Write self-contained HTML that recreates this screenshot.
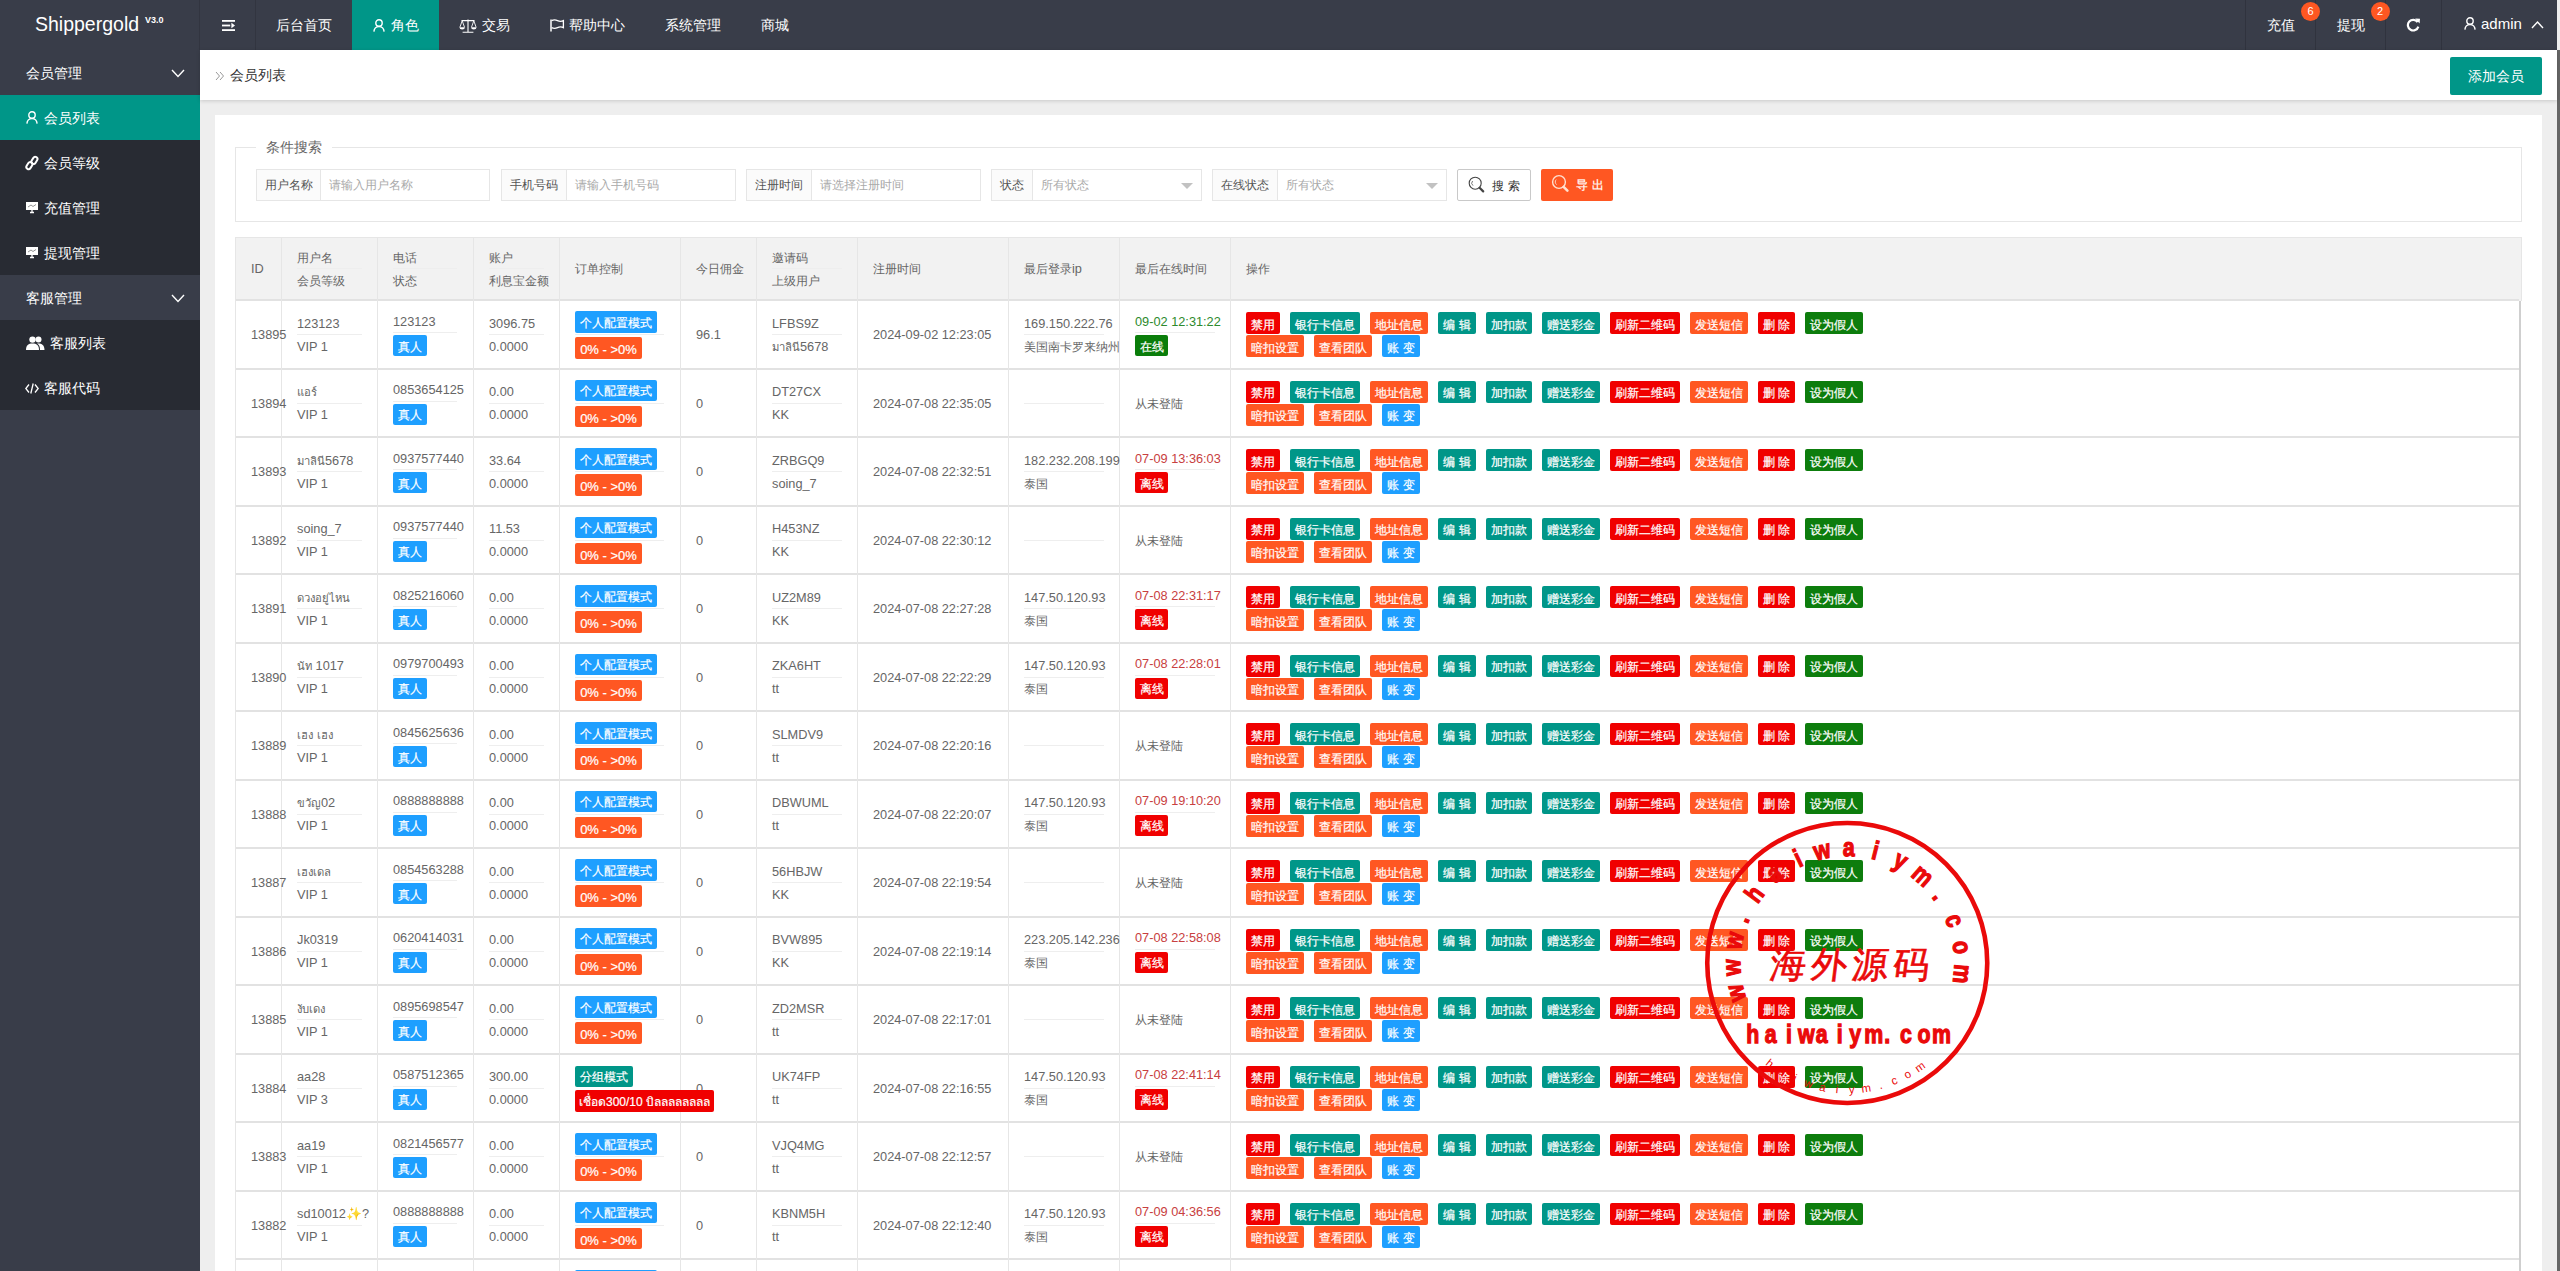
<!DOCTYPE html><html><head><meta charset="utf-8"><title>会员列表</title><style>
*{margin:0;padding:0;box-sizing:border-box}
html,body{width:2560px;height:1271px;overflow:hidden;background:#eeeeee;font-family:"Liberation Sans",sans-serif;position:relative}
.a{position:absolute;white-space:nowrap}
.t{position:absolute;white-space:nowrap;line-height:16px;height:16px}
.hd{color:#fff;font-size:14px;line-height:20px;height:20px}
.bdg{-webkit-text-stroke:0.2px #fff;position:absolute;height:21px;line-height:21px;color:#fff;font-size:12px;padding-top:1.5px;text-align:center;border-radius:2px;white-space:nowrap}
.sep{position:absolute;height:1px;background:#eee}
.vl{position:absolute;width:1px;background:#e6e6e6}
.hl{position:absolute;height:2px;background:#e2e2e2}
.cell{font-size:12.5px;color:#666}
</style></head><body>
<div class="a" style="left:0;top:0;width:2557px;height:50px;background:#393D49"></div>
<div class="a" style="left:35px;top:12px;font-size:19.5px;line-height:24px;color:#fff">Shippergold</div>
<div class="a" style="left:145px;top:14px;font-size:9px;line-height:12px;color:#fff;font-weight:bold">V3.0</div>
<div class="a" style="left:199px;top:0;width:1px;height:50px;background:rgba(0,0,0,.12)"></div>
<div class="a" style="left:255px;top:0;width:1px;height:50px;background:rgba(0,0,0,.12)"></div>
<svg class="a" style="left:222px;top:19.5px" width="13" height="11" viewBox="0 0 13 11"><rect x="0" y="0" width="13" height="1.8" fill="#fff"/><rect x="0" y="4.6" width="8.2" height="1.8" fill="#fff"/><rect x="0" y="9.2" width="13" height="1.8" fill="#fff"/><path d="M9.4 2.8 L13 5.5 L9.4 8.2 Z" fill="#fff"/></svg>
<div class="a" style="left:352px;top:0;width:87px;height:50px;background:#009688"></div>
<div class="a hd" style="left:276px;top:15px">后台首页</div>
<div class="a hd" style="left:391px;top:15px">角色</div>
<div class="a hd" style="left:482px;top:15px">交易</div>
<div class="a hd" style="left:569px;top:15px">帮助中心</div>
<div class="a hd" style="left:665px;top:15px">系统管理</div>
<div class="a hd" style="left:761px;top:15px">商城</div>
<svg class="a" style="left:373px;top:19px" width="12" height="13" viewBox="0 0 12 13"><circle cx="6" cy="4" r="3.2" fill="none" stroke="#fff" stroke-width="1.4"/><path d="M0.9 12.6 C1.2 8.8 3.4 7.6 6 7.6 C8.6 7.6 10.8 8.8 11.1 12.6" fill="none" stroke="#fff" stroke-width="1.4"/></svg>
<svg class="a" style="left:459px;top:18.5px" width="18" height="14" viewBox="0 0 18 14"><circle cx="9" cy="1.3" r="0.9" fill="#fff"/><path d="M9 1.5 V13 M3.6 13.3 H14.4 M2.5 1.6 H15.5" stroke="#fff" stroke-width="1.1" fill="none"/><path d="M3.2 1.8 L0.9 8.2 M3.2 1.8 L5.5 8.2 M14.8 1.8 L12.5 8.2 M14.8 1.8 L17.1 8.2" stroke="#fff" stroke-width="0.9" fill="none"/><path d="M0.4 8.2 H6 Q5.8 10.6 3.2 10.6 Q0.6 10.6 0.4 8.2 Z M12 8.2 H17.6 Q17.4 10.6 14.8 10.6 Q12.2 10.6 12 8.2 Z" fill="#fff"/></svg>
<svg class="a" style="left:550px;top:18.5px" width="15" height="13" viewBox="0 0 15 13"><path d="M1 0.5 V12.5" stroke="#fff" stroke-width="1.5"/><path d="M1.6 1.6 Q4.5 0.2 7.5 1.6 T13.4 1.6 V8.6 Q10.5 7.2 7.5 8.6 T1.6 8.6" stroke="#fff" stroke-width="1.3" fill="none"/></svg>
<div class="a" style="left:2245px;top:0;width:1px;height:50px;background:rgba(0,0,0,.15)"></div>
<div class="a" style="left:2315px;top:0;width:1px;height:50px;background:rgba(0,0,0,.15)"></div>
<div class="a" style="left:2385px;top:0;width:1px;height:50px;background:rgba(0,0,0,.15)"></div>
<div class="a" style="left:2441px;top:0;width:1px;height:50px;background:rgba(0,0,0,.15)"></div>
<div class="a hd" style="left:2267px;top:15px">充值</div>
<div class="a hd" style="left:2337px;top:15px">提现</div>
<div class="a" style="left:2301.0px;top:1.5px;width:19px;height:19px;border-radius:50%;background:#FF5722;color:#fff;font-size:11px;line-height:19px;text-align:center">6</div>
<div class="a" style="left:2370.5px;top:1.5px;width:19px;height:19px;border-radius:50%;background:#FF5722;color:#fff;font-size:11px;line-height:19px;text-align:center">2</div>
<svg class="a" style="left:2406px;top:18px" width="15" height="14" viewBox="0 0 15 14"><path d="M11.6 4.2 A5.3 5.3 0 1 0 12.3 8.6" fill="none" stroke="#fff" stroke-width="2.2"/><path d="M9.2 0.6 L14 0.8 L13.6 5.6 Z" fill="#fff"/></svg>
<svg class="a" style="left:2464px;top:17px" width="12" height="13" viewBox="0 0 12 13"><circle cx="6" cy="4" r="3.2" fill="none" stroke="#fff" stroke-width="1.4"/><path d="M0.9 12.6 C1.2 8.8 3.4 7.6 6 7.6 C8.6 7.6 10.8 8.8 11.1 12.6" fill="none" stroke="#fff" stroke-width="1.4"/></svg>
<div class="a" style="left:2481px;top:14px;font-size:15px;line-height:20px;color:#fff">admin</div>
<svg class="a" style="left:2531px;top:20px" width="13" height="9" viewBox="0 0 13 9"><path d="M1 8 L6.5 2 L12 8" fill="none" stroke="#fff" stroke-width="1.4"/></svg>
<div class="a" style="left:2557px;top:50px;width:3px;height:1221px;background:#666"></div>
<div class="a" style="left:0;top:50px;width:200px;height:1221px;background:#393D49"></div>
<div class="a" style="left:0;top:95px;width:200px;height:180px;background:#282B33"></div>
<div class="a" style="left:0;top:320px;width:200px;height:90px;background:#282B33"></div>
<div class="a" style="left:0;top:95px;width:200px;height:45px;background:#009688"></div>
<div class="a hd" style="left:26px;top:63px">会员管理</div>
<svg class="a" style="left:171px;top:69px" width="14" height="9" viewBox="0 0 14 9"><path d="M1 1 L7 7.5 L13 1" fill="none" stroke="#fff" stroke-width="1.4"/></svg>
<div class="a hd" style="left:26px;top:288px">客服管理</div>
<svg class="a" style="left:171px;top:294px" width="14" height="9" viewBox="0 0 14 9"><path d="M1 1 L7 7.5 L13 1" fill="none" stroke="#fff" stroke-width="1.4"/></svg>
<div class="a hd" style="left:44px;top:108px">会员列表</div>
<div class="a hd" style="left:44px;top:153px">会员等级</div>
<div class="a hd" style="left:44px;top:198px">充值管理</div>
<div class="a hd" style="left:44px;top:243px">提现管理</div>
<div class="a hd" style="left:50px;top:333px">客服列表</div>
<div class="a hd" style="left:44px;top:378px">客服代码</div>
<svg class="a" style="left:26px;top:111px" width="12" height="13" viewBox="0 0 12 13"><circle cx="6" cy="4" r="3.2" fill="none" stroke="#fff" stroke-width="1.4"/><path d="M0.9 12.6 C1.2 8.8 3.4 7.6 6 7.6 C8.6 7.6 10.8 8.8 11.1 12.6" fill="none" stroke="#fff" stroke-width="1.4"/></svg>
<svg class="a" style="left:24px;top:155px" width="16" height="16" viewBox="0 0 16 16"><g fill="none" stroke="#fff" stroke-width="2"><rect x="1.6" y="8.4" width="7.6" height="4.4" rx="2.2" transform="rotate(-58 5.4 10.6)"/><rect x="6.6" y="3.2" width="7.6" height="4.4" rx="2.2" transform="rotate(-58 10.4 5.4)"/></g></svg>
<svg class="a" style="left:26px;top:202px" width="12" height="12" viewBox="0 0 12 12"><rect x="0" y="0" width="12" height="8" fill="#fff"/><path d="M4 10.5 H8 M6 8 V10.5" stroke="#fff" stroke-width="1.3"/><path d="M2 5 L5 3 L7 4.5 L10 2.5" stroke="#777" stroke-width=".8" fill="none"/></svg>
<svg class="a" style="left:26px;top:247px" width="12" height="12" viewBox="0 0 12 12"><rect x="0" y="0" width="12" height="8" fill="#fff"/><path d="M4 10.5 H8 M6 8 V10.5" stroke="#fff" stroke-width="1.3"/><path d="M2 5 L5 3 L7 4.5 L10 2.5" stroke="#777" stroke-width=".8" fill="none"/></svg>
<svg class="a" style="left:26px;top:336px" width="19" height="14" viewBox="0 0 19 14"><g fill="#fff"><circle cx="6.5" cy="3.6" r="3.2"/><path d="M0 14 C0 9 2.5 7.5 6.5 7.5 C10.5 7.5 13 9 13 14 Z"/><circle cx="12.5" cy="3.6" r="3"/><path d="M11 7.6 C15.5 7.3 18.5 8.8 18.5 14 H14 C14 10.5 13 8.8 11 7.6 Z"/></g></svg>
<svg class="a" style="left:25px;top:383px" width="14" height="11" viewBox="0 0 14 11"><path d="M4 1.5 L0.8 5.5 L4 9.5 M10 1.5 L13.2 5.5 L10 9.5 M8.2 0.5 L5.8 10.5" fill="none" stroke="#fff" stroke-width="1.3"/></svg>
<div class="a" style="left:200px;top:50px;width:2357px;height:50px;background:#fff;box-shadow:0 1px 4px rgba(0,0,0,.16)"></div>
<svg class="a" style="left:215px;top:71px" width="10" height="10" viewBox="0 0 10 10"><path d="M1 1 L4.5 5 L1 9 M5 1 L8.5 5 L5 9" fill="none" stroke="#999" stroke-width="1"/></svg>
<div class="a" style="left:230px;top:65px;font-size:14px;line-height:20px;color:#333">会员列表</div>
<div class="a" style="left:2450px;top:57px;width:92px;height:38px;border-radius:2px;background:#009688;color:#fff;font-size:14px;line-height:38px;text-align:center">添加会员</div>
<div class="a" style="left:215px;top:115px;width:2327px;height:1200px;background:#fff"></div>
<div class="a" style="left:235px;top:147px;width:2287px;height:75px;border:1px solid #e6e6e6"></div>
<div class="a" style="left:256px;top:137px;padding:0 10px;background:#fff;font-size:14px;line-height:20px;color:#666">条件搜索</div>
<div class="a" style="left:256px;top:169px;width:65px;height:32px;border:1px solid #e6e6e6;background:#fbfbfb;font-size:12px;line-height:31px;text-align:center;color:#555">用户名称</div><div class="a" style="left:320px;top:169px;width:170px;height:32px;border:1px solid #e6e6e6;background:#fff;font-size:12px;line-height:31px;color:#aaa;padding-left:8px">请输入用户名称</div>
<div class="a" style="left:501px;top:169px;width:66px;height:32px;border:1px solid #e6e6e6;background:#fbfbfb;font-size:12px;line-height:31px;text-align:center;color:#555">手机号码</div><div class="a" style="left:566px;top:169px;width:170px;height:32px;border:1px solid #e6e6e6;background:#fff;font-size:12px;line-height:31px;color:#aaa;padding-left:8px">请输入手机号码</div>
<div class="a" style="left:746px;top:169px;width:66px;height:32px;border:1px solid #e6e6e6;background:#fbfbfb;font-size:12px;line-height:31px;text-align:center;color:#555">注册时间</div><div class="a" style="left:811px;top:169px;width:170px;height:32px;border:1px solid #e6e6e6;background:#fff;font-size:12px;line-height:31px;color:#aaa;padding-left:8px">请选择注册时间</div>
<div class="a" style="left:991px;top:169px;width:42px;height:32px;border:1px solid #e6e6e6;background:#fbfbfb;font-size:12px;line-height:31px;text-align:center;color:#555">状态</div><div class="a" style="left:1032px;top:169px;width:170px;height:32px;border:1px solid #e6e6e6;background:#fff;font-size:12px;line-height:31px;color:#aaa;padding-left:8px">所有状态</div><div class="a" style="left:1181px;top:183px;width:0;height:0;border-left:6px solid transparent;border-right:6px solid transparent;border-top:6px solid #c2c2c2"></div>
<div class="a" style="left:1212px;top:169px;width:66px;height:32px;border:1px solid #e6e6e6;background:#fbfbfb;font-size:12px;line-height:31px;text-align:center;color:#555">在线状态</div><div class="a" style="left:1277px;top:169px;width:170px;height:32px;border:1px solid #e6e6e6;background:#fff;font-size:12px;line-height:31px;color:#aaa;padding-left:8px">所有状态</div><div class="a" style="left:1426px;top:183px;width:0;height:0;border-left:6px solid transparent;border-right:6px solid transparent;border-top:6px solid #c2c2c2"></div>
<div class="a" style="left:1457px;top:169px;width:74px;height:32px;border:1px solid #c9c9c9;background:#fff;border-radius:2px"></div>
<svg class="a" style="left:1468px;top:176px" width="18" height="18" viewBox="0 0 18 18"><circle cx="7.2" cy="7.2" r="6" fill="none" stroke="#444" stroke-width="1.1"/><path d="M11.6 11.8 L15.2 15.4" stroke="#444" stroke-width="2.2" stroke-linecap="round"/><path d="M4.6 5 A3.2 3.2 0 0 0 5 9.6" fill="none" stroke="#555" stroke-width=".8"/></svg>
<div class="a" style="left:1492px;top:178px;font-size:12px;line-height:16px;color:#333;letter-spacing:4px">搜索</div>
<div class="a" style="left:1541px;top:169px;width:72px;height:32px;background:#FF5722;border-radius:2px"></div>
<svg class="a" style="left:1551px;top:174px" width="19" height="19" viewBox="0 0 19 19"><circle cx="8" cy="8" r="6.4" fill="none" stroke="#ffe0d0" stroke-width="1.4"/><path d="M12.6 12.8 L16.4 16.6" stroke="#ffe0d0" stroke-width="2.6" stroke-linecap="round"/><path d="M5.2 5.6 A3.4 3.4 0 0 0 5.6 10.6" fill="none" stroke="#ffe0d0" stroke-width=".9"/></svg>
<div class="a" style="left:1576px;top:177px;font-size:12px;line-height:16px;color:#fff;letter-spacing:4px;-webkit-text-stroke:0.2px #fff">导出</div>
<div class="a" style="left:235px;top:237px;width:2287px;height:64px;background:#f2f2f2;border:1px solid #e6e6e6;border-bottom:none"></div>
<div class="t cell" style="left:251px;top:261px;color:#666;font-size:12.75px;">ID</div>
<div class="t cell" style="left:297px;top:250px;color:#666;font-size:12.75px;"><span style="font-size:12px">用户名</span></div>
<div class="sep" style="left:297px;top:268px;width:65px"></div>
<div class="t cell" style="left:297px;top:273px;color:#666;font-size:12.75px;"><span style="font-size:12px">会员等级</span></div>
<div class="t cell" style="left:393px;top:250px;color:#666;font-size:12.75px;"><span style="font-size:12px">电话</span></div>
<div class="sep" style="left:393px;top:268px;width:64px"></div>
<div class="t cell" style="left:393px;top:273px;color:#666;font-size:12.75px;"><span style="font-size:12px">状态</span></div>
<div class="t cell" style="left:489px;top:250px;color:#666;font-size:12.75px;"><span style="font-size:12px">账户</span></div>
<div class="sep" style="left:489px;top:268px;width:55px"></div>
<div class="t cell" style="left:489px;top:273px;color:#666;font-size:12.75px;"><span style="font-size:12px">利息宝金额</span></div>
<div class="t cell" style="left:772px;top:250px;color:#666;font-size:12.75px;"><span style="font-size:12px">邀请码</span></div>
<div class="sep" style="left:772px;top:268px;width:70px"></div>
<div class="t cell" style="left:772px;top:273px;color:#666;font-size:12.75px;"><span style="font-size:12px">上级用户</span></div>
<div class="t cell" style="left:575px;top:261px;color:#666;font-size:12.75px;"><span style="font-size:12px">订单控制</span></div>
<div class="t cell" style="left:696px;top:261px;color:#666;font-size:12.75px;"><span style="font-size:12px">今日佣金</span></div>
<div class="t cell" style="left:873px;top:261px;color:#666;font-size:12.75px;"><span style="font-size:12px">注册时间</span></div>
<div class="t cell" style="left:1024px;top:261px;color:#666;font-size:12.75px;"><span style="font-size:12px">最后登录</span>ip</div>
<div class="t cell" style="left:1135px;top:261px;color:#666;font-size:12.75px;"><span style="font-size:12px">最后在线时间</span></div>
<div class="t cell" style="left:1246px;top:261px;color:#666;font-size:12.75px;"><span style="font-size:12px">操作</span></div>
<div class="hl" style="left:235px;top:299.0px;width:2284px"></div>
<div class="hl" style="left:235px;top:367.5px;width:2284px"></div>
<div class="hl" style="left:235px;top:436.0px;width:2284px"></div>
<div class="hl" style="left:235px;top:504.5px;width:2284px"></div>
<div class="hl" style="left:235px;top:573.0px;width:2284px"></div>
<div class="hl" style="left:235px;top:641.5px;width:2284px"></div>
<div class="hl" style="left:235px;top:710.0px;width:2284px"></div>
<div class="hl" style="left:235px;top:778.5px;width:2284px"></div>
<div class="hl" style="left:235px;top:847.0px;width:2284px"></div>
<div class="hl" style="left:235px;top:915.5px;width:2284px"></div>
<div class="hl" style="left:235px;top:984.0px;width:2284px"></div>
<div class="hl" style="left:235px;top:1052.5px;width:2284px"></div>
<div class="hl" style="left:235px;top:1121.0px;width:2284px"></div>
<div class="hl" style="left:235px;top:1189.5px;width:2284px"></div>
<div class="hl" style="left:235px;top:1258.0px;width:2284px"></div>
<div class="hl" style="left:235px;top:1326.5px;width:2284px"></div>
<div class="vl" style="left:235px;top:237px;height:1100px"></div>
<div class="vl" style="left:2521px;top:237px;height:64px"></div>
<div class="vl" style="left:281px;top:237px;height:1100px"></div>
<div class="vl" style="left:377px;top:237px;height:1100px"></div>
<div class="vl" style="left:473px;top:237px;height:1100px"></div>
<div class="vl" style="left:559px;top:237px;height:1100px"></div>
<div class="vl" style="left:680px;top:237px;height:1100px"></div>
<div class="vl" style="left:756px;top:237px;height:1100px"></div>
<div class="vl" style="left:857px;top:237px;height:1100px"></div>
<div class="vl" style="left:1008px;top:237px;height:1100px"></div>
<div class="vl" style="left:1119px;top:237px;height:1100px"></div>
<div class="vl" style="left:1230px;top:237px;height:1100px"></div>
<div class="a" style="left:2519px;top:301px;width:2px;height:1000px;background:#cfcfcf"></div>
<div class="t cell" style="left:251px;top:327.0px;color:#666;font-size:12.75px;">13895</div>
<div class="t cell" style="left:297px;top:315.5px;color:#666;font-size:12.75px;">123123</div>
<div class="sep" style="left:297px;top:334.0px;width:65px"></div>
<div class="t cell" style="left:297px;top:338.7px;color:#666;font-size:12.75px;">VIP 1</div>
<div class="t cell" style="left:393px;top:313.5px;color:#666;font-size:12.75px;">123123</div>
<div class="sep" style="left:393px;top:332.0px;width:64px"></div>
<div class="bdg" style="left:393px;top:335.0px;width:34px;height:21px;line-height:21px;padding-top:1.5px;font-size:12px;background:#1E9FFF">真人</div>
<div class="t cell" style="left:489px;top:315.5px;color:#666;font-size:12.75px;">3096.75</div>
<div class="sep" style="left:489px;top:334.0px;width:55px"></div>
<div class="t cell" style="left:489px;top:338.7px;color:#666;font-size:12.75px;">0.0000</div>
<div class="t cell" style="left:696px;top:327.0px;color:#666;font-size:12.75px;">96.1</div>
<div class="bdg" style="left:575px;top:311.25px;width:82px;height:21.5px;line-height:21.5px;padding-top:1.5px;font-size:12px;background:#1E9FFF">个人配置模式</div>
<div class="sep" style="left:575px;top:334.0px;width:89px"></div>
<div class="bdg" style="left:575px;top:337.25px;width:67px;height:21.5px;line-height:21.5px;padding-top:2px;font-size:13px;background:#FF5722">0% - &gt;0%</div>
<div class="t cell" style="left:772px;top:315.5px;color:#666;font-size:12.75px;">LFBS9Z</div>
<div class="sep" style="left:772px;top:334.0px;width:70px"></div>
<div class="t cell" style="left:772px;top:338.7px;color:#666;font-size:12.75px;"><span style="font-size:11.25px">มาลินี</span>5678</div>
<div class="t cell" style="left:873px;top:327.0px;color:#666;font-size:12.75px;">2024-09-02 12:23:05</div>
<div class="t cell" style="left:1024px;top:315.5px;color:#666;font-size:12.75px;">169.150.222.76</div>
<div class="sep" style="left:1024px;top:334.0px;width:80px"></div>
<div class="t cell" style="left:1024px;top:338.7px;color:#666;font-size:12.75px;width:95px;overflow:hidden"><span style="font-size:12px">美国南卡罗来纳州</span></div>
<div class="t cell" style="left:1135px;top:313.5px;color:#2d8a2d;font-size:12.75px;">09-02 12:31:22</div>
<div class="sep" style="left:1135px;top:332.0px;width:80px"></div>
<div class="bdg" style="left:1135px;top:335.0px;width:33px;height:21px;line-height:21px;padding-top:1.5px;font-size:12px;background:#0a7d0a">在线</div>
<div class="bdg" style="left:1246px;top:312.0px;width:34px;height:22px;line-height:22px;padding-top:1.5px;font-size:12px;background:#f00000">禁用</div>
<div class="bdg" style="left:1290px;top:312.0px;width:70px;height:22px;line-height:22px;padding-top:1.5px;font-size:12px;background:#009688">银行卡信息</div>
<div class="bdg" style="left:1370px;top:312.0px;width:58px;height:22px;line-height:22px;padding-top:1.5px;font-size:12px;background:#FF5722">地址信息</div>
<div class="bdg" style="left:1438px;top:312.0px;width:38px;height:22px;line-height:22px;padding-top:1.5px;font-size:12px;background:#009688">编 辑</div>
<div class="bdg" style="left:1486px;top:312.0px;width:46px;height:22px;line-height:22px;padding-top:1.5px;font-size:12px;background:#009688">加扣款</div>
<div class="bdg" style="left:1542px;top:312.0px;width:58px;height:22px;line-height:22px;padding-top:1.5px;font-size:12px;background:#009688">赠送彩金</div>
<div class="bdg" style="left:1610px;top:312.0px;width:70px;height:22px;line-height:22px;padding-top:1.5px;font-size:12px;background:#f00000">刷新二维码</div>
<div class="bdg" style="left:1690px;top:312.0px;width:58px;height:22px;line-height:22px;padding-top:1.5px;font-size:12px;background:#FF5722">发送短信</div>
<div class="bdg" style="left:1758px;top:312.0px;width:37px;height:22px;line-height:22px;padding-top:1.5px;font-size:12px;background:#f00000">删 除</div>
<div class="bdg" style="left:1805px;top:312.0px;width:58px;height:22px;line-height:22px;padding-top:1.5px;font-size:12px;background:#0d7d0d">设为假人</div>
<div class="bdg" style="left:1246px;top:335.25px;width:58px;height:22px;line-height:22px;padding-top:1.5px;font-size:12px;background:#FF5722">暗扣设置</div>
<div class="bdg" style="left:1314px;top:335.25px;width:58px;height:22px;line-height:22px;padding-top:1.5px;font-size:12px;background:#FF5722">查看团队</div>
<div class="bdg" style="left:1382px;top:335.25px;width:38px;height:22px;line-height:22px;padding-top:1.5px;font-size:12px;background:#1E9FFF">账 变</div>
<div class="t cell" style="left:251px;top:395.5px;color:#666;font-size:12.75px;">13894</div>
<div class="t cell" style="left:297px;top:384.0px;color:#666;font-size:12.75px;"><span style="font-size:11.25px">แอร์</span></div>
<div class="sep" style="left:297px;top:402.5px;width:65px"></div>
<div class="t cell" style="left:297px;top:407.2px;color:#666;font-size:12.75px;">VIP 1</div>
<div class="t cell" style="left:393px;top:382.0px;color:#666;font-size:12.75px;">0853654125</div>
<div class="sep" style="left:393px;top:400.5px;width:64px"></div>
<div class="bdg" style="left:393px;top:403.5px;width:34px;height:21px;line-height:21px;padding-top:1.5px;font-size:12px;background:#1E9FFF">真人</div>
<div class="t cell" style="left:489px;top:384.0px;color:#666;font-size:12.75px;">0.00</div>
<div class="sep" style="left:489px;top:402.5px;width:55px"></div>
<div class="t cell" style="left:489px;top:407.2px;color:#666;font-size:12.75px;">0.0000</div>
<div class="t cell" style="left:696px;top:395.5px;color:#666;font-size:12.75px;">0</div>
<div class="bdg" style="left:575px;top:379.75px;width:82px;height:21.5px;line-height:21.5px;padding-top:1.5px;font-size:12px;background:#1E9FFF">个人配置模式</div>
<div class="sep" style="left:575px;top:402.5px;width:89px"></div>
<div class="bdg" style="left:575px;top:405.75px;width:67px;height:21.5px;line-height:21.5px;padding-top:2px;font-size:13px;background:#FF5722">0% - &gt;0%</div>
<div class="t cell" style="left:772px;top:384.0px;color:#666;font-size:12.75px;">DT27CX</div>
<div class="sep" style="left:772px;top:402.5px;width:70px"></div>
<div class="t cell" style="left:772px;top:407.2px;color:#666;font-size:12.75px;">KK</div>
<div class="t cell" style="left:873px;top:395.5px;color:#666;font-size:12.75px;">2024-07-08 22:35:05</div>
<div class="t cell" style="left:1024px;top:384.0px;color:#666;font-size:12.75px;"></div>
<div class="sep" style="left:1024px;top:402.5px;width:80px"></div>
<div class="t cell" style="left:1024px;top:407.2px;color:#666;font-size:12.75px;width:95px;overflow:hidden"></div>
<div class="t cell" style="left:1135px;top:395.5px;color:#666;font-size:12.75px;"><span style="font-size:12px">从未登陆</span></div>
<div class="bdg" style="left:1246px;top:380.5px;width:34px;height:22px;line-height:22px;padding-top:1.5px;font-size:12px;background:#f00000">禁用</div>
<div class="bdg" style="left:1290px;top:380.5px;width:70px;height:22px;line-height:22px;padding-top:1.5px;font-size:12px;background:#009688">银行卡信息</div>
<div class="bdg" style="left:1370px;top:380.5px;width:58px;height:22px;line-height:22px;padding-top:1.5px;font-size:12px;background:#FF5722">地址信息</div>
<div class="bdg" style="left:1438px;top:380.5px;width:38px;height:22px;line-height:22px;padding-top:1.5px;font-size:12px;background:#009688">编 辑</div>
<div class="bdg" style="left:1486px;top:380.5px;width:46px;height:22px;line-height:22px;padding-top:1.5px;font-size:12px;background:#009688">加扣款</div>
<div class="bdg" style="left:1542px;top:380.5px;width:58px;height:22px;line-height:22px;padding-top:1.5px;font-size:12px;background:#009688">赠送彩金</div>
<div class="bdg" style="left:1610px;top:380.5px;width:70px;height:22px;line-height:22px;padding-top:1.5px;font-size:12px;background:#f00000">刷新二维码</div>
<div class="bdg" style="left:1690px;top:380.5px;width:58px;height:22px;line-height:22px;padding-top:1.5px;font-size:12px;background:#FF5722">发送短信</div>
<div class="bdg" style="left:1758px;top:380.5px;width:37px;height:22px;line-height:22px;padding-top:1.5px;font-size:12px;background:#f00000">删 除</div>
<div class="bdg" style="left:1805px;top:380.5px;width:58px;height:22px;line-height:22px;padding-top:1.5px;font-size:12px;background:#0d7d0d">设为假人</div>
<div class="bdg" style="left:1246px;top:403.75px;width:58px;height:22px;line-height:22px;padding-top:1.5px;font-size:12px;background:#FF5722">暗扣设置</div>
<div class="bdg" style="left:1314px;top:403.75px;width:58px;height:22px;line-height:22px;padding-top:1.5px;font-size:12px;background:#FF5722">查看团队</div>
<div class="bdg" style="left:1382px;top:403.75px;width:38px;height:22px;line-height:22px;padding-top:1.5px;font-size:12px;background:#1E9FFF">账 变</div>
<div class="t cell" style="left:251px;top:464.0px;color:#666;font-size:12.75px;">13893</div>
<div class="t cell" style="left:297px;top:452.5px;color:#666;font-size:12.75px;"><span style="font-size:11.25px">มาลินี</span>5678</div>
<div class="sep" style="left:297px;top:471.0px;width:65px"></div>
<div class="t cell" style="left:297px;top:475.7px;color:#666;font-size:12.75px;">VIP 1</div>
<div class="t cell" style="left:393px;top:450.5px;color:#666;font-size:12.75px;">0937577440</div>
<div class="sep" style="left:393px;top:469.0px;width:64px"></div>
<div class="bdg" style="left:393px;top:472.0px;width:34px;height:21px;line-height:21px;padding-top:1.5px;font-size:12px;background:#1E9FFF">真人</div>
<div class="t cell" style="left:489px;top:452.5px;color:#666;font-size:12.75px;">33.64</div>
<div class="sep" style="left:489px;top:471.0px;width:55px"></div>
<div class="t cell" style="left:489px;top:475.7px;color:#666;font-size:12.75px;">0.0000</div>
<div class="t cell" style="left:696px;top:464.0px;color:#666;font-size:12.75px;">0</div>
<div class="bdg" style="left:575px;top:448.25px;width:82px;height:21.5px;line-height:21.5px;padding-top:1.5px;font-size:12px;background:#1E9FFF">个人配置模式</div>
<div class="sep" style="left:575px;top:471.0px;width:89px"></div>
<div class="bdg" style="left:575px;top:474.25px;width:67px;height:21.5px;line-height:21.5px;padding-top:2px;font-size:13px;background:#FF5722">0% - &gt;0%</div>
<div class="t cell" style="left:772px;top:452.5px;color:#666;font-size:12.75px;">ZRBGQ9</div>
<div class="sep" style="left:772px;top:471.0px;width:70px"></div>
<div class="t cell" style="left:772px;top:475.7px;color:#666;font-size:12.75px;">soing_7</div>
<div class="t cell" style="left:873px;top:464.0px;color:#666;font-size:12.75px;">2024-07-08 22:32:51</div>
<div class="t cell" style="left:1024px;top:452.5px;color:#666;font-size:12.75px;">182.232.208.199</div>
<div class="sep" style="left:1024px;top:471.0px;width:80px"></div>
<div class="t cell" style="left:1024px;top:475.7px;color:#666;font-size:12.75px;width:95px;overflow:hidden"><span style="font-size:12px">泰国</span></div>
<div class="t cell" style="left:1135px;top:450.5px;color:#c84040;font-size:12.75px;">07-09 13:36:03</div>
<div class="sep" style="left:1135px;top:469.0px;width:80px"></div>
<div class="bdg" style="left:1135px;top:472.0px;width:33px;height:21px;line-height:21px;padding-top:1.5px;font-size:12px;background:#f00000">离线</div>
<div class="bdg" style="left:1246px;top:449.0px;width:34px;height:22px;line-height:22px;padding-top:1.5px;font-size:12px;background:#f00000">禁用</div>
<div class="bdg" style="left:1290px;top:449.0px;width:70px;height:22px;line-height:22px;padding-top:1.5px;font-size:12px;background:#009688">银行卡信息</div>
<div class="bdg" style="left:1370px;top:449.0px;width:58px;height:22px;line-height:22px;padding-top:1.5px;font-size:12px;background:#FF5722">地址信息</div>
<div class="bdg" style="left:1438px;top:449.0px;width:38px;height:22px;line-height:22px;padding-top:1.5px;font-size:12px;background:#009688">编 辑</div>
<div class="bdg" style="left:1486px;top:449.0px;width:46px;height:22px;line-height:22px;padding-top:1.5px;font-size:12px;background:#009688">加扣款</div>
<div class="bdg" style="left:1542px;top:449.0px;width:58px;height:22px;line-height:22px;padding-top:1.5px;font-size:12px;background:#009688">赠送彩金</div>
<div class="bdg" style="left:1610px;top:449.0px;width:70px;height:22px;line-height:22px;padding-top:1.5px;font-size:12px;background:#f00000">刷新二维码</div>
<div class="bdg" style="left:1690px;top:449.0px;width:58px;height:22px;line-height:22px;padding-top:1.5px;font-size:12px;background:#FF5722">发送短信</div>
<div class="bdg" style="left:1758px;top:449.0px;width:37px;height:22px;line-height:22px;padding-top:1.5px;font-size:12px;background:#f00000">删 除</div>
<div class="bdg" style="left:1805px;top:449.0px;width:58px;height:22px;line-height:22px;padding-top:1.5px;font-size:12px;background:#0d7d0d">设为假人</div>
<div class="bdg" style="left:1246px;top:472.25px;width:58px;height:22px;line-height:22px;padding-top:1.5px;font-size:12px;background:#FF5722">暗扣设置</div>
<div class="bdg" style="left:1314px;top:472.25px;width:58px;height:22px;line-height:22px;padding-top:1.5px;font-size:12px;background:#FF5722">查看团队</div>
<div class="bdg" style="left:1382px;top:472.25px;width:38px;height:22px;line-height:22px;padding-top:1.5px;font-size:12px;background:#1E9FFF">账 变</div>
<div class="t cell" style="left:251px;top:532.5px;color:#666;font-size:12.75px;">13892</div>
<div class="t cell" style="left:297px;top:521.0px;color:#666;font-size:12.75px;">soing_7</div>
<div class="sep" style="left:297px;top:539.5px;width:65px"></div>
<div class="t cell" style="left:297px;top:544.2px;color:#666;font-size:12.75px;">VIP 1</div>
<div class="t cell" style="left:393px;top:519.0px;color:#666;font-size:12.75px;">0937577440</div>
<div class="sep" style="left:393px;top:537.5px;width:64px"></div>
<div class="bdg" style="left:393px;top:540.5px;width:34px;height:21px;line-height:21px;padding-top:1.5px;font-size:12px;background:#1E9FFF">真人</div>
<div class="t cell" style="left:489px;top:521.0px;color:#666;font-size:12.75px;">11.53</div>
<div class="sep" style="left:489px;top:539.5px;width:55px"></div>
<div class="t cell" style="left:489px;top:544.2px;color:#666;font-size:12.75px;">0.0000</div>
<div class="t cell" style="left:696px;top:532.5px;color:#666;font-size:12.75px;">0</div>
<div class="bdg" style="left:575px;top:516.75px;width:82px;height:21.5px;line-height:21.5px;padding-top:1.5px;font-size:12px;background:#1E9FFF">个人配置模式</div>
<div class="sep" style="left:575px;top:539.5px;width:89px"></div>
<div class="bdg" style="left:575px;top:542.75px;width:67px;height:21.5px;line-height:21.5px;padding-top:2px;font-size:13px;background:#FF5722">0% - &gt;0%</div>
<div class="t cell" style="left:772px;top:521.0px;color:#666;font-size:12.75px;">H453NZ</div>
<div class="sep" style="left:772px;top:539.5px;width:70px"></div>
<div class="t cell" style="left:772px;top:544.2px;color:#666;font-size:12.75px;">KK</div>
<div class="t cell" style="left:873px;top:532.5px;color:#666;font-size:12.75px;">2024-07-08 22:30:12</div>
<div class="t cell" style="left:1024px;top:521.0px;color:#666;font-size:12.75px;"></div>
<div class="sep" style="left:1024px;top:539.5px;width:80px"></div>
<div class="t cell" style="left:1024px;top:544.2px;color:#666;font-size:12.75px;width:95px;overflow:hidden"></div>
<div class="t cell" style="left:1135px;top:532.5px;color:#666;font-size:12.75px;"><span style="font-size:12px">从未登陆</span></div>
<div class="bdg" style="left:1246px;top:517.5px;width:34px;height:22px;line-height:22px;padding-top:1.5px;font-size:12px;background:#f00000">禁用</div>
<div class="bdg" style="left:1290px;top:517.5px;width:70px;height:22px;line-height:22px;padding-top:1.5px;font-size:12px;background:#009688">银行卡信息</div>
<div class="bdg" style="left:1370px;top:517.5px;width:58px;height:22px;line-height:22px;padding-top:1.5px;font-size:12px;background:#FF5722">地址信息</div>
<div class="bdg" style="left:1438px;top:517.5px;width:38px;height:22px;line-height:22px;padding-top:1.5px;font-size:12px;background:#009688">编 辑</div>
<div class="bdg" style="left:1486px;top:517.5px;width:46px;height:22px;line-height:22px;padding-top:1.5px;font-size:12px;background:#009688">加扣款</div>
<div class="bdg" style="left:1542px;top:517.5px;width:58px;height:22px;line-height:22px;padding-top:1.5px;font-size:12px;background:#009688">赠送彩金</div>
<div class="bdg" style="left:1610px;top:517.5px;width:70px;height:22px;line-height:22px;padding-top:1.5px;font-size:12px;background:#f00000">刷新二维码</div>
<div class="bdg" style="left:1690px;top:517.5px;width:58px;height:22px;line-height:22px;padding-top:1.5px;font-size:12px;background:#FF5722">发送短信</div>
<div class="bdg" style="left:1758px;top:517.5px;width:37px;height:22px;line-height:22px;padding-top:1.5px;font-size:12px;background:#f00000">删 除</div>
<div class="bdg" style="left:1805px;top:517.5px;width:58px;height:22px;line-height:22px;padding-top:1.5px;font-size:12px;background:#0d7d0d">设为假人</div>
<div class="bdg" style="left:1246px;top:540.75px;width:58px;height:22px;line-height:22px;padding-top:1.5px;font-size:12px;background:#FF5722">暗扣设置</div>
<div class="bdg" style="left:1314px;top:540.75px;width:58px;height:22px;line-height:22px;padding-top:1.5px;font-size:12px;background:#FF5722">查看团队</div>
<div class="bdg" style="left:1382px;top:540.75px;width:38px;height:22px;line-height:22px;padding-top:1.5px;font-size:12px;background:#1E9FFF">账 变</div>
<div class="t cell" style="left:251px;top:601.0px;color:#666;font-size:12.75px;">13891</div>
<div class="t cell" style="left:297px;top:589.5px;color:#666;font-size:12.75px;"><span style="font-size:11.25px">ดวงอยู่ไหน</span></div>
<div class="sep" style="left:297px;top:608.0px;width:65px"></div>
<div class="t cell" style="left:297px;top:612.7px;color:#666;font-size:12.75px;">VIP 1</div>
<div class="t cell" style="left:393px;top:587.5px;color:#666;font-size:12.75px;">0825216060</div>
<div class="sep" style="left:393px;top:606.0px;width:64px"></div>
<div class="bdg" style="left:393px;top:609.0px;width:34px;height:21px;line-height:21px;padding-top:1.5px;font-size:12px;background:#1E9FFF">真人</div>
<div class="t cell" style="left:489px;top:589.5px;color:#666;font-size:12.75px;">0.00</div>
<div class="sep" style="left:489px;top:608.0px;width:55px"></div>
<div class="t cell" style="left:489px;top:612.7px;color:#666;font-size:12.75px;">0.0000</div>
<div class="t cell" style="left:696px;top:601.0px;color:#666;font-size:12.75px;">0</div>
<div class="bdg" style="left:575px;top:585.25px;width:82px;height:21.5px;line-height:21.5px;padding-top:1.5px;font-size:12px;background:#1E9FFF">个人配置模式</div>
<div class="sep" style="left:575px;top:608.0px;width:89px"></div>
<div class="bdg" style="left:575px;top:611.25px;width:67px;height:21.5px;line-height:21.5px;padding-top:2px;font-size:13px;background:#FF5722">0% - &gt;0%</div>
<div class="t cell" style="left:772px;top:589.5px;color:#666;font-size:12.75px;">UZ2M89</div>
<div class="sep" style="left:772px;top:608.0px;width:70px"></div>
<div class="t cell" style="left:772px;top:612.7px;color:#666;font-size:12.75px;">KK</div>
<div class="t cell" style="left:873px;top:601.0px;color:#666;font-size:12.75px;">2024-07-08 22:27:28</div>
<div class="t cell" style="left:1024px;top:589.5px;color:#666;font-size:12.75px;">147.50.120.93</div>
<div class="sep" style="left:1024px;top:608.0px;width:80px"></div>
<div class="t cell" style="left:1024px;top:612.7px;color:#666;font-size:12.75px;width:95px;overflow:hidden"><span style="font-size:12px">泰国</span></div>
<div class="t cell" style="left:1135px;top:587.5px;color:#c84040;font-size:12.75px;">07-08 22:31:17</div>
<div class="sep" style="left:1135px;top:606.0px;width:80px"></div>
<div class="bdg" style="left:1135px;top:609.0px;width:33px;height:21px;line-height:21px;padding-top:1.5px;font-size:12px;background:#f00000">离线</div>
<div class="bdg" style="left:1246px;top:586.0px;width:34px;height:22px;line-height:22px;padding-top:1.5px;font-size:12px;background:#f00000">禁用</div>
<div class="bdg" style="left:1290px;top:586.0px;width:70px;height:22px;line-height:22px;padding-top:1.5px;font-size:12px;background:#009688">银行卡信息</div>
<div class="bdg" style="left:1370px;top:586.0px;width:58px;height:22px;line-height:22px;padding-top:1.5px;font-size:12px;background:#FF5722">地址信息</div>
<div class="bdg" style="left:1438px;top:586.0px;width:38px;height:22px;line-height:22px;padding-top:1.5px;font-size:12px;background:#009688">编 辑</div>
<div class="bdg" style="left:1486px;top:586.0px;width:46px;height:22px;line-height:22px;padding-top:1.5px;font-size:12px;background:#009688">加扣款</div>
<div class="bdg" style="left:1542px;top:586.0px;width:58px;height:22px;line-height:22px;padding-top:1.5px;font-size:12px;background:#009688">赠送彩金</div>
<div class="bdg" style="left:1610px;top:586.0px;width:70px;height:22px;line-height:22px;padding-top:1.5px;font-size:12px;background:#f00000">刷新二维码</div>
<div class="bdg" style="left:1690px;top:586.0px;width:58px;height:22px;line-height:22px;padding-top:1.5px;font-size:12px;background:#FF5722">发送短信</div>
<div class="bdg" style="left:1758px;top:586.0px;width:37px;height:22px;line-height:22px;padding-top:1.5px;font-size:12px;background:#f00000">删 除</div>
<div class="bdg" style="left:1805px;top:586.0px;width:58px;height:22px;line-height:22px;padding-top:1.5px;font-size:12px;background:#0d7d0d">设为假人</div>
<div class="bdg" style="left:1246px;top:609.25px;width:58px;height:22px;line-height:22px;padding-top:1.5px;font-size:12px;background:#FF5722">暗扣设置</div>
<div class="bdg" style="left:1314px;top:609.25px;width:58px;height:22px;line-height:22px;padding-top:1.5px;font-size:12px;background:#FF5722">查看团队</div>
<div class="bdg" style="left:1382px;top:609.25px;width:38px;height:22px;line-height:22px;padding-top:1.5px;font-size:12px;background:#1E9FFF">账 变</div>
<div class="t cell" style="left:251px;top:669.5px;color:#666;font-size:12.75px;">13890</div>
<div class="t cell" style="left:297px;top:658.0px;color:#666;font-size:12.75px;"><span style="font-size:11.25px">นัท</span> 1017</div>
<div class="sep" style="left:297px;top:676.5px;width:65px"></div>
<div class="t cell" style="left:297px;top:681.2px;color:#666;font-size:12.75px;">VIP 1</div>
<div class="t cell" style="left:393px;top:656.0px;color:#666;font-size:12.75px;">0979700493</div>
<div class="sep" style="left:393px;top:674.5px;width:64px"></div>
<div class="bdg" style="left:393px;top:677.5px;width:34px;height:21px;line-height:21px;padding-top:1.5px;font-size:12px;background:#1E9FFF">真人</div>
<div class="t cell" style="left:489px;top:658.0px;color:#666;font-size:12.75px;">0.00</div>
<div class="sep" style="left:489px;top:676.5px;width:55px"></div>
<div class="t cell" style="left:489px;top:681.2px;color:#666;font-size:12.75px;">0.0000</div>
<div class="t cell" style="left:696px;top:669.5px;color:#666;font-size:12.75px;">0</div>
<div class="bdg" style="left:575px;top:653.75px;width:82px;height:21.5px;line-height:21.5px;padding-top:1.5px;font-size:12px;background:#1E9FFF">个人配置模式</div>
<div class="sep" style="left:575px;top:676.5px;width:89px"></div>
<div class="bdg" style="left:575px;top:679.75px;width:67px;height:21.5px;line-height:21.5px;padding-top:2px;font-size:13px;background:#FF5722">0% - &gt;0%</div>
<div class="t cell" style="left:772px;top:658.0px;color:#666;font-size:12.75px;">ZKA6HT</div>
<div class="sep" style="left:772px;top:676.5px;width:70px"></div>
<div class="t cell" style="left:772px;top:681.2px;color:#666;font-size:12.75px;">tt</div>
<div class="t cell" style="left:873px;top:669.5px;color:#666;font-size:12.75px;">2024-07-08 22:22:29</div>
<div class="t cell" style="left:1024px;top:658.0px;color:#666;font-size:12.75px;">147.50.120.93</div>
<div class="sep" style="left:1024px;top:676.5px;width:80px"></div>
<div class="t cell" style="left:1024px;top:681.2px;color:#666;font-size:12.75px;width:95px;overflow:hidden"><span style="font-size:12px">泰国</span></div>
<div class="t cell" style="left:1135px;top:656.0px;color:#c84040;font-size:12.75px;">07-08 22:28:01</div>
<div class="sep" style="left:1135px;top:674.5px;width:80px"></div>
<div class="bdg" style="left:1135px;top:677.5px;width:33px;height:21px;line-height:21px;padding-top:1.5px;font-size:12px;background:#f00000">离线</div>
<div class="bdg" style="left:1246px;top:654.5px;width:34px;height:22px;line-height:22px;padding-top:1.5px;font-size:12px;background:#f00000">禁用</div>
<div class="bdg" style="left:1290px;top:654.5px;width:70px;height:22px;line-height:22px;padding-top:1.5px;font-size:12px;background:#009688">银行卡信息</div>
<div class="bdg" style="left:1370px;top:654.5px;width:58px;height:22px;line-height:22px;padding-top:1.5px;font-size:12px;background:#FF5722">地址信息</div>
<div class="bdg" style="left:1438px;top:654.5px;width:38px;height:22px;line-height:22px;padding-top:1.5px;font-size:12px;background:#009688">编 辑</div>
<div class="bdg" style="left:1486px;top:654.5px;width:46px;height:22px;line-height:22px;padding-top:1.5px;font-size:12px;background:#009688">加扣款</div>
<div class="bdg" style="left:1542px;top:654.5px;width:58px;height:22px;line-height:22px;padding-top:1.5px;font-size:12px;background:#009688">赠送彩金</div>
<div class="bdg" style="left:1610px;top:654.5px;width:70px;height:22px;line-height:22px;padding-top:1.5px;font-size:12px;background:#f00000">刷新二维码</div>
<div class="bdg" style="left:1690px;top:654.5px;width:58px;height:22px;line-height:22px;padding-top:1.5px;font-size:12px;background:#FF5722">发送短信</div>
<div class="bdg" style="left:1758px;top:654.5px;width:37px;height:22px;line-height:22px;padding-top:1.5px;font-size:12px;background:#f00000">删 除</div>
<div class="bdg" style="left:1805px;top:654.5px;width:58px;height:22px;line-height:22px;padding-top:1.5px;font-size:12px;background:#0d7d0d">设为假人</div>
<div class="bdg" style="left:1246px;top:677.75px;width:58px;height:22px;line-height:22px;padding-top:1.5px;font-size:12px;background:#FF5722">暗扣设置</div>
<div class="bdg" style="left:1314px;top:677.75px;width:58px;height:22px;line-height:22px;padding-top:1.5px;font-size:12px;background:#FF5722">查看团队</div>
<div class="bdg" style="left:1382px;top:677.75px;width:38px;height:22px;line-height:22px;padding-top:1.5px;font-size:12px;background:#1E9FFF">账 变</div>
<div class="t cell" style="left:251px;top:738.0px;color:#666;font-size:12.75px;">13889</div>
<div class="t cell" style="left:297px;top:726.5px;color:#666;font-size:12.75px;"><span style="font-size:11.25px">เฮง</span> <span style="font-size:11.25px">เฮง</span></div>
<div class="sep" style="left:297px;top:745.0px;width:65px"></div>
<div class="t cell" style="left:297px;top:749.7px;color:#666;font-size:12.75px;">VIP 1</div>
<div class="t cell" style="left:393px;top:724.5px;color:#666;font-size:12.75px;">0845625636</div>
<div class="sep" style="left:393px;top:743.0px;width:64px"></div>
<div class="bdg" style="left:393px;top:746.0px;width:34px;height:21px;line-height:21px;padding-top:1.5px;font-size:12px;background:#1E9FFF">真人</div>
<div class="t cell" style="left:489px;top:726.5px;color:#666;font-size:12.75px;">0.00</div>
<div class="sep" style="left:489px;top:745.0px;width:55px"></div>
<div class="t cell" style="left:489px;top:749.7px;color:#666;font-size:12.75px;">0.0000</div>
<div class="t cell" style="left:696px;top:738.0px;color:#666;font-size:12.75px;">0</div>
<div class="bdg" style="left:575px;top:722.25px;width:82px;height:21.5px;line-height:21.5px;padding-top:1.5px;font-size:12px;background:#1E9FFF">个人配置模式</div>
<div class="sep" style="left:575px;top:745.0px;width:89px"></div>
<div class="bdg" style="left:575px;top:748.25px;width:67px;height:21.5px;line-height:21.5px;padding-top:2px;font-size:13px;background:#FF5722">0% - &gt;0%</div>
<div class="t cell" style="left:772px;top:726.5px;color:#666;font-size:12.75px;">SLMDV9</div>
<div class="sep" style="left:772px;top:745.0px;width:70px"></div>
<div class="t cell" style="left:772px;top:749.7px;color:#666;font-size:12.75px;">tt</div>
<div class="t cell" style="left:873px;top:738.0px;color:#666;font-size:12.75px;">2024-07-08 22:20:16</div>
<div class="t cell" style="left:1024px;top:726.5px;color:#666;font-size:12.75px;"></div>
<div class="sep" style="left:1024px;top:745.0px;width:80px"></div>
<div class="t cell" style="left:1024px;top:749.7px;color:#666;font-size:12.75px;width:95px;overflow:hidden"></div>
<div class="t cell" style="left:1135px;top:738.0px;color:#666;font-size:12.75px;"><span style="font-size:12px">从未登陆</span></div>
<div class="bdg" style="left:1246px;top:723.0px;width:34px;height:22px;line-height:22px;padding-top:1.5px;font-size:12px;background:#f00000">禁用</div>
<div class="bdg" style="left:1290px;top:723.0px;width:70px;height:22px;line-height:22px;padding-top:1.5px;font-size:12px;background:#009688">银行卡信息</div>
<div class="bdg" style="left:1370px;top:723.0px;width:58px;height:22px;line-height:22px;padding-top:1.5px;font-size:12px;background:#FF5722">地址信息</div>
<div class="bdg" style="left:1438px;top:723.0px;width:38px;height:22px;line-height:22px;padding-top:1.5px;font-size:12px;background:#009688">编 辑</div>
<div class="bdg" style="left:1486px;top:723.0px;width:46px;height:22px;line-height:22px;padding-top:1.5px;font-size:12px;background:#009688">加扣款</div>
<div class="bdg" style="left:1542px;top:723.0px;width:58px;height:22px;line-height:22px;padding-top:1.5px;font-size:12px;background:#009688">赠送彩金</div>
<div class="bdg" style="left:1610px;top:723.0px;width:70px;height:22px;line-height:22px;padding-top:1.5px;font-size:12px;background:#f00000">刷新二维码</div>
<div class="bdg" style="left:1690px;top:723.0px;width:58px;height:22px;line-height:22px;padding-top:1.5px;font-size:12px;background:#FF5722">发送短信</div>
<div class="bdg" style="left:1758px;top:723.0px;width:37px;height:22px;line-height:22px;padding-top:1.5px;font-size:12px;background:#f00000">删 除</div>
<div class="bdg" style="left:1805px;top:723.0px;width:58px;height:22px;line-height:22px;padding-top:1.5px;font-size:12px;background:#0d7d0d">设为假人</div>
<div class="bdg" style="left:1246px;top:746.25px;width:58px;height:22px;line-height:22px;padding-top:1.5px;font-size:12px;background:#FF5722">暗扣设置</div>
<div class="bdg" style="left:1314px;top:746.25px;width:58px;height:22px;line-height:22px;padding-top:1.5px;font-size:12px;background:#FF5722">查看团队</div>
<div class="bdg" style="left:1382px;top:746.25px;width:38px;height:22px;line-height:22px;padding-top:1.5px;font-size:12px;background:#1E9FFF">账 变</div>
<div class="t cell" style="left:251px;top:806.5px;color:#666;font-size:12.75px;">13888</div>
<div class="t cell" style="left:297px;top:795.0px;color:#666;font-size:12.75px;"><span style="font-size:11.25px">ขวัญ</span>02</div>
<div class="sep" style="left:297px;top:813.5px;width:65px"></div>
<div class="t cell" style="left:297px;top:818.2px;color:#666;font-size:12.75px;">VIP 1</div>
<div class="t cell" style="left:393px;top:793.0px;color:#666;font-size:12.75px;">0888888888</div>
<div class="sep" style="left:393px;top:811.5px;width:64px"></div>
<div class="bdg" style="left:393px;top:814.5px;width:34px;height:21px;line-height:21px;padding-top:1.5px;font-size:12px;background:#1E9FFF">真人</div>
<div class="t cell" style="left:489px;top:795.0px;color:#666;font-size:12.75px;">0.00</div>
<div class="sep" style="left:489px;top:813.5px;width:55px"></div>
<div class="t cell" style="left:489px;top:818.2px;color:#666;font-size:12.75px;">0.0000</div>
<div class="t cell" style="left:696px;top:806.5px;color:#666;font-size:12.75px;">0</div>
<div class="bdg" style="left:575px;top:790.75px;width:82px;height:21.5px;line-height:21.5px;padding-top:1.5px;font-size:12px;background:#1E9FFF">个人配置模式</div>
<div class="sep" style="left:575px;top:813.5px;width:89px"></div>
<div class="bdg" style="left:575px;top:816.75px;width:67px;height:21.5px;line-height:21.5px;padding-top:2px;font-size:13px;background:#FF5722">0% - &gt;0%</div>
<div class="t cell" style="left:772px;top:795.0px;color:#666;font-size:12.75px;">DBWUML</div>
<div class="sep" style="left:772px;top:813.5px;width:70px"></div>
<div class="t cell" style="left:772px;top:818.2px;color:#666;font-size:12.75px;">tt</div>
<div class="t cell" style="left:873px;top:806.5px;color:#666;font-size:12.75px;">2024-07-08 22:20:07</div>
<div class="t cell" style="left:1024px;top:795.0px;color:#666;font-size:12.75px;">147.50.120.93</div>
<div class="sep" style="left:1024px;top:813.5px;width:80px"></div>
<div class="t cell" style="left:1024px;top:818.2px;color:#666;font-size:12.75px;width:95px;overflow:hidden"><span style="font-size:12px">泰国</span></div>
<div class="t cell" style="left:1135px;top:793.0px;color:#c84040;font-size:12.75px;">07-09 19:10:20</div>
<div class="sep" style="left:1135px;top:811.5px;width:80px"></div>
<div class="bdg" style="left:1135px;top:814.5px;width:33px;height:21px;line-height:21px;padding-top:1.5px;font-size:12px;background:#f00000">离线</div>
<div class="bdg" style="left:1246px;top:791.5px;width:34px;height:22px;line-height:22px;padding-top:1.5px;font-size:12px;background:#f00000">禁用</div>
<div class="bdg" style="left:1290px;top:791.5px;width:70px;height:22px;line-height:22px;padding-top:1.5px;font-size:12px;background:#009688">银行卡信息</div>
<div class="bdg" style="left:1370px;top:791.5px;width:58px;height:22px;line-height:22px;padding-top:1.5px;font-size:12px;background:#FF5722">地址信息</div>
<div class="bdg" style="left:1438px;top:791.5px;width:38px;height:22px;line-height:22px;padding-top:1.5px;font-size:12px;background:#009688">编 辑</div>
<div class="bdg" style="left:1486px;top:791.5px;width:46px;height:22px;line-height:22px;padding-top:1.5px;font-size:12px;background:#009688">加扣款</div>
<div class="bdg" style="left:1542px;top:791.5px;width:58px;height:22px;line-height:22px;padding-top:1.5px;font-size:12px;background:#009688">赠送彩金</div>
<div class="bdg" style="left:1610px;top:791.5px;width:70px;height:22px;line-height:22px;padding-top:1.5px;font-size:12px;background:#f00000">刷新二维码</div>
<div class="bdg" style="left:1690px;top:791.5px;width:58px;height:22px;line-height:22px;padding-top:1.5px;font-size:12px;background:#FF5722">发送短信</div>
<div class="bdg" style="left:1758px;top:791.5px;width:37px;height:22px;line-height:22px;padding-top:1.5px;font-size:12px;background:#f00000">删 除</div>
<div class="bdg" style="left:1805px;top:791.5px;width:58px;height:22px;line-height:22px;padding-top:1.5px;font-size:12px;background:#0d7d0d">设为假人</div>
<div class="bdg" style="left:1246px;top:814.75px;width:58px;height:22px;line-height:22px;padding-top:1.5px;font-size:12px;background:#FF5722">暗扣设置</div>
<div class="bdg" style="left:1314px;top:814.75px;width:58px;height:22px;line-height:22px;padding-top:1.5px;font-size:12px;background:#FF5722">查看团队</div>
<div class="bdg" style="left:1382px;top:814.75px;width:38px;height:22px;line-height:22px;padding-top:1.5px;font-size:12px;background:#1E9FFF">账 变</div>
<div class="t cell" style="left:251px;top:875.0px;color:#666;font-size:12.75px;">13887</div>
<div class="t cell" style="left:297px;top:863.5px;color:#666;font-size:12.75px;"><span style="font-size:11.25px">เฮงเดล</span></div>
<div class="sep" style="left:297px;top:882.0px;width:65px"></div>
<div class="t cell" style="left:297px;top:886.7px;color:#666;font-size:12.75px;">VIP 1</div>
<div class="t cell" style="left:393px;top:861.5px;color:#666;font-size:12.75px;">0854563288</div>
<div class="sep" style="left:393px;top:880.0px;width:64px"></div>
<div class="bdg" style="left:393px;top:883.0px;width:34px;height:21px;line-height:21px;padding-top:1.5px;font-size:12px;background:#1E9FFF">真人</div>
<div class="t cell" style="left:489px;top:863.5px;color:#666;font-size:12.75px;">0.00</div>
<div class="sep" style="left:489px;top:882.0px;width:55px"></div>
<div class="t cell" style="left:489px;top:886.7px;color:#666;font-size:12.75px;">0.0000</div>
<div class="t cell" style="left:696px;top:875.0px;color:#666;font-size:12.75px;">0</div>
<div class="bdg" style="left:575px;top:859.25px;width:82px;height:21.5px;line-height:21.5px;padding-top:1.5px;font-size:12px;background:#1E9FFF">个人配置模式</div>
<div class="sep" style="left:575px;top:882.0px;width:89px"></div>
<div class="bdg" style="left:575px;top:885.25px;width:67px;height:21.5px;line-height:21.5px;padding-top:2px;font-size:13px;background:#FF5722">0% - &gt;0%</div>
<div class="t cell" style="left:772px;top:863.5px;color:#666;font-size:12.75px;">56HBJW</div>
<div class="sep" style="left:772px;top:882.0px;width:70px"></div>
<div class="t cell" style="left:772px;top:886.7px;color:#666;font-size:12.75px;">KK</div>
<div class="t cell" style="left:873px;top:875.0px;color:#666;font-size:12.75px;">2024-07-08 22:19:54</div>
<div class="t cell" style="left:1024px;top:863.5px;color:#666;font-size:12.75px;"></div>
<div class="sep" style="left:1024px;top:882.0px;width:80px"></div>
<div class="t cell" style="left:1024px;top:886.7px;color:#666;font-size:12.75px;width:95px;overflow:hidden"></div>
<div class="t cell" style="left:1135px;top:875.0px;color:#666;font-size:12.75px;"><span style="font-size:12px">从未登陆</span></div>
<div class="bdg" style="left:1246px;top:860.0px;width:34px;height:22px;line-height:22px;padding-top:1.5px;font-size:12px;background:#f00000">禁用</div>
<div class="bdg" style="left:1290px;top:860.0px;width:70px;height:22px;line-height:22px;padding-top:1.5px;font-size:12px;background:#009688">银行卡信息</div>
<div class="bdg" style="left:1370px;top:860.0px;width:58px;height:22px;line-height:22px;padding-top:1.5px;font-size:12px;background:#FF5722">地址信息</div>
<div class="bdg" style="left:1438px;top:860.0px;width:38px;height:22px;line-height:22px;padding-top:1.5px;font-size:12px;background:#009688">编 辑</div>
<div class="bdg" style="left:1486px;top:860.0px;width:46px;height:22px;line-height:22px;padding-top:1.5px;font-size:12px;background:#009688">加扣款</div>
<div class="bdg" style="left:1542px;top:860.0px;width:58px;height:22px;line-height:22px;padding-top:1.5px;font-size:12px;background:#009688">赠送彩金</div>
<div class="bdg" style="left:1610px;top:860.0px;width:70px;height:22px;line-height:22px;padding-top:1.5px;font-size:12px;background:#f00000">刷新二维码</div>
<div class="bdg" style="left:1690px;top:860.0px;width:58px;height:22px;line-height:22px;padding-top:1.5px;font-size:12px;background:#FF5722">发送短信</div>
<div class="bdg" style="left:1758px;top:860.0px;width:37px;height:22px;line-height:22px;padding-top:1.5px;font-size:12px;background:#f00000">删 除</div>
<div class="bdg" style="left:1805px;top:860.0px;width:58px;height:22px;line-height:22px;padding-top:1.5px;font-size:12px;background:#0d7d0d">设为假人</div>
<div class="bdg" style="left:1246px;top:883.25px;width:58px;height:22px;line-height:22px;padding-top:1.5px;font-size:12px;background:#FF5722">暗扣设置</div>
<div class="bdg" style="left:1314px;top:883.25px;width:58px;height:22px;line-height:22px;padding-top:1.5px;font-size:12px;background:#FF5722">查看团队</div>
<div class="bdg" style="left:1382px;top:883.25px;width:38px;height:22px;line-height:22px;padding-top:1.5px;font-size:12px;background:#1E9FFF">账 变</div>
<div class="t cell" style="left:251px;top:943.5px;color:#666;font-size:12.75px;">13886</div>
<div class="t cell" style="left:297px;top:932.0px;color:#666;font-size:12.75px;">Jk0319</div>
<div class="sep" style="left:297px;top:950.5px;width:65px"></div>
<div class="t cell" style="left:297px;top:955.2px;color:#666;font-size:12.75px;">VIP 1</div>
<div class="t cell" style="left:393px;top:930.0px;color:#666;font-size:12.75px;">0620414031</div>
<div class="sep" style="left:393px;top:948.5px;width:64px"></div>
<div class="bdg" style="left:393px;top:951.5px;width:34px;height:21px;line-height:21px;padding-top:1.5px;font-size:12px;background:#1E9FFF">真人</div>
<div class="t cell" style="left:489px;top:932.0px;color:#666;font-size:12.75px;">0.00</div>
<div class="sep" style="left:489px;top:950.5px;width:55px"></div>
<div class="t cell" style="left:489px;top:955.2px;color:#666;font-size:12.75px;">0.0000</div>
<div class="t cell" style="left:696px;top:943.5px;color:#666;font-size:12.75px;">0</div>
<div class="bdg" style="left:575px;top:927.75px;width:82px;height:21.5px;line-height:21.5px;padding-top:1.5px;font-size:12px;background:#1E9FFF">个人配置模式</div>
<div class="sep" style="left:575px;top:950.5px;width:89px"></div>
<div class="bdg" style="left:575px;top:953.75px;width:67px;height:21.5px;line-height:21.5px;padding-top:2px;font-size:13px;background:#FF5722">0% - &gt;0%</div>
<div class="t cell" style="left:772px;top:932.0px;color:#666;font-size:12.75px;">BVW895</div>
<div class="sep" style="left:772px;top:950.5px;width:70px"></div>
<div class="t cell" style="left:772px;top:955.2px;color:#666;font-size:12.75px;">KK</div>
<div class="t cell" style="left:873px;top:943.5px;color:#666;font-size:12.75px;">2024-07-08 22:19:14</div>
<div class="t cell" style="left:1024px;top:932.0px;color:#666;font-size:12.75px;">223.205.142.236</div>
<div class="sep" style="left:1024px;top:950.5px;width:80px"></div>
<div class="t cell" style="left:1024px;top:955.2px;color:#666;font-size:12.75px;width:95px;overflow:hidden"><span style="font-size:12px">泰国</span></div>
<div class="t cell" style="left:1135px;top:930.0px;color:#c84040;font-size:12.75px;">07-08 22:58:08</div>
<div class="sep" style="left:1135px;top:948.5px;width:80px"></div>
<div class="bdg" style="left:1135px;top:951.5px;width:33px;height:21px;line-height:21px;padding-top:1.5px;font-size:12px;background:#f00000">离线</div>
<div class="bdg" style="left:1246px;top:928.5px;width:34px;height:22px;line-height:22px;padding-top:1.5px;font-size:12px;background:#f00000">禁用</div>
<div class="bdg" style="left:1290px;top:928.5px;width:70px;height:22px;line-height:22px;padding-top:1.5px;font-size:12px;background:#009688">银行卡信息</div>
<div class="bdg" style="left:1370px;top:928.5px;width:58px;height:22px;line-height:22px;padding-top:1.5px;font-size:12px;background:#FF5722">地址信息</div>
<div class="bdg" style="left:1438px;top:928.5px;width:38px;height:22px;line-height:22px;padding-top:1.5px;font-size:12px;background:#009688">编 辑</div>
<div class="bdg" style="left:1486px;top:928.5px;width:46px;height:22px;line-height:22px;padding-top:1.5px;font-size:12px;background:#009688">加扣款</div>
<div class="bdg" style="left:1542px;top:928.5px;width:58px;height:22px;line-height:22px;padding-top:1.5px;font-size:12px;background:#009688">赠送彩金</div>
<div class="bdg" style="left:1610px;top:928.5px;width:70px;height:22px;line-height:22px;padding-top:1.5px;font-size:12px;background:#f00000">刷新二维码</div>
<div class="bdg" style="left:1690px;top:928.5px;width:58px;height:22px;line-height:22px;padding-top:1.5px;font-size:12px;background:#FF5722">发送短信</div>
<div class="bdg" style="left:1758px;top:928.5px;width:37px;height:22px;line-height:22px;padding-top:1.5px;font-size:12px;background:#f00000">删 除</div>
<div class="bdg" style="left:1805px;top:928.5px;width:58px;height:22px;line-height:22px;padding-top:1.5px;font-size:12px;background:#0d7d0d">设为假人</div>
<div class="bdg" style="left:1246px;top:951.75px;width:58px;height:22px;line-height:22px;padding-top:1.5px;font-size:12px;background:#FF5722">暗扣设置</div>
<div class="bdg" style="left:1314px;top:951.75px;width:58px;height:22px;line-height:22px;padding-top:1.5px;font-size:12px;background:#FF5722">查看团队</div>
<div class="bdg" style="left:1382px;top:951.75px;width:38px;height:22px;line-height:22px;padding-top:1.5px;font-size:12px;background:#1E9FFF">账 变</div>
<div class="t cell" style="left:251px;top:1012.0px;color:#666;font-size:12.75px;">13885</div>
<div class="t cell" style="left:297px;top:1000.5px;color:#666;font-size:12.75px;"><span style="font-size:11.25px">งับเดง</span></div>
<div class="sep" style="left:297px;top:1019.0px;width:65px"></div>
<div class="t cell" style="left:297px;top:1023.7px;color:#666;font-size:12.75px;">VIP 1</div>
<div class="t cell" style="left:393px;top:998.5px;color:#666;font-size:12.75px;">0895698547</div>
<div class="sep" style="left:393px;top:1017.0px;width:64px"></div>
<div class="bdg" style="left:393px;top:1020.0px;width:34px;height:21px;line-height:21px;padding-top:1.5px;font-size:12px;background:#1E9FFF">真人</div>
<div class="t cell" style="left:489px;top:1000.5px;color:#666;font-size:12.75px;">0.00</div>
<div class="sep" style="left:489px;top:1019.0px;width:55px"></div>
<div class="t cell" style="left:489px;top:1023.7px;color:#666;font-size:12.75px;">0.0000</div>
<div class="t cell" style="left:696px;top:1012.0px;color:#666;font-size:12.75px;">0</div>
<div class="bdg" style="left:575px;top:996.25px;width:82px;height:21.5px;line-height:21.5px;padding-top:1.5px;font-size:12px;background:#1E9FFF">个人配置模式</div>
<div class="sep" style="left:575px;top:1019.0px;width:89px"></div>
<div class="bdg" style="left:575px;top:1022.25px;width:67px;height:21.5px;line-height:21.5px;padding-top:2px;font-size:13px;background:#FF5722">0% - &gt;0%</div>
<div class="t cell" style="left:772px;top:1000.5px;color:#666;font-size:12.75px;">ZD2MSR</div>
<div class="sep" style="left:772px;top:1019.0px;width:70px"></div>
<div class="t cell" style="left:772px;top:1023.7px;color:#666;font-size:12.75px;">tt</div>
<div class="t cell" style="left:873px;top:1012.0px;color:#666;font-size:12.75px;">2024-07-08 22:17:01</div>
<div class="t cell" style="left:1024px;top:1000.5px;color:#666;font-size:12.75px;"></div>
<div class="sep" style="left:1024px;top:1019.0px;width:80px"></div>
<div class="t cell" style="left:1024px;top:1023.7px;color:#666;font-size:12.75px;width:95px;overflow:hidden"></div>
<div class="t cell" style="left:1135px;top:1012.0px;color:#666;font-size:12.75px;"><span style="font-size:12px">从未登陆</span></div>
<div class="bdg" style="left:1246px;top:997.0px;width:34px;height:22px;line-height:22px;padding-top:1.5px;font-size:12px;background:#f00000">禁用</div>
<div class="bdg" style="left:1290px;top:997.0px;width:70px;height:22px;line-height:22px;padding-top:1.5px;font-size:12px;background:#009688">银行卡信息</div>
<div class="bdg" style="left:1370px;top:997.0px;width:58px;height:22px;line-height:22px;padding-top:1.5px;font-size:12px;background:#FF5722">地址信息</div>
<div class="bdg" style="left:1438px;top:997.0px;width:38px;height:22px;line-height:22px;padding-top:1.5px;font-size:12px;background:#009688">编 辑</div>
<div class="bdg" style="left:1486px;top:997.0px;width:46px;height:22px;line-height:22px;padding-top:1.5px;font-size:12px;background:#009688">加扣款</div>
<div class="bdg" style="left:1542px;top:997.0px;width:58px;height:22px;line-height:22px;padding-top:1.5px;font-size:12px;background:#009688">赠送彩金</div>
<div class="bdg" style="left:1610px;top:997.0px;width:70px;height:22px;line-height:22px;padding-top:1.5px;font-size:12px;background:#f00000">刷新二维码</div>
<div class="bdg" style="left:1690px;top:997.0px;width:58px;height:22px;line-height:22px;padding-top:1.5px;font-size:12px;background:#FF5722">发送短信</div>
<div class="bdg" style="left:1758px;top:997.0px;width:37px;height:22px;line-height:22px;padding-top:1.5px;font-size:12px;background:#f00000">删 除</div>
<div class="bdg" style="left:1805px;top:997.0px;width:58px;height:22px;line-height:22px;padding-top:1.5px;font-size:12px;background:#0d7d0d">设为假人</div>
<div class="bdg" style="left:1246px;top:1020.25px;width:58px;height:22px;line-height:22px;padding-top:1.5px;font-size:12px;background:#FF5722">暗扣设置</div>
<div class="bdg" style="left:1314px;top:1020.25px;width:58px;height:22px;line-height:22px;padding-top:1.5px;font-size:12px;background:#FF5722">查看团队</div>
<div class="bdg" style="left:1382px;top:1020.25px;width:38px;height:22px;line-height:22px;padding-top:1.5px;font-size:12px;background:#1E9FFF">账 变</div>
<div class="t cell" style="left:251px;top:1080.5px;color:#666;font-size:12.75px;">13884</div>
<div class="t cell" style="left:297px;top:1069.0px;color:#666;font-size:12.75px;">aa28</div>
<div class="sep" style="left:297px;top:1087.5px;width:65px"></div>
<div class="t cell" style="left:297px;top:1092.2px;color:#666;font-size:12.75px;">VIP 3</div>
<div class="t cell" style="left:393px;top:1067.0px;color:#666;font-size:12.75px;">0587512365</div>
<div class="sep" style="left:393px;top:1085.5px;width:64px"></div>
<div class="bdg" style="left:393px;top:1088.5px;width:34px;height:21px;line-height:21px;padding-top:1.5px;font-size:12px;background:#1E9FFF">真人</div>
<div class="t cell" style="left:489px;top:1069.0px;color:#666;font-size:12.75px;">300.00</div>
<div class="sep" style="left:489px;top:1087.5px;width:55px"></div>
<div class="t cell" style="left:489px;top:1092.2px;color:#666;font-size:12.75px;">0.0000</div>
<div class="t cell" style="left:696px;top:1080.5px;color:#666;font-size:12.75px;">0</div>
<div class="bdg" style="left:575px;top:1065.5px;width:58px;height:21.5px;line-height:21.5px;padding-top:1.5px;font-size:12px;background:#009688">分组模式</div>
<div class="bdg" style="left:575px;top:1090.0px;width:139px;height:21.5px;line-height:21.5px;padding-top:1.5px;font-size:12px;background:#f00000">เชื่อด300/10 บิลลลลลลลล</div>
<div class="t cell" style="left:772px;top:1069.0px;color:#666;font-size:12.75px;">UK74FP</div>
<div class="sep" style="left:772px;top:1087.5px;width:70px"></div>
<div class="t cell" style="left:772px;top:1092.2px;color:#666;font-size:12.75px;">tt</div>
<div class="t cell" style="left:873px;top:1080.5px;color:#666;font-size:12.75px;">2024-07-08 22:16:55</div>
<div class="t cell" style="left:1024px;top:1069.0px;color:#666;font-size:12.75px;">147.50.120.93</div>
<div class="sep" style="left:1024px;top:1087.5px;width:80px"></div>
<div class="t cell" style="left:1024px;top:1092.2px;color:#666;font-size:12.75px;width:95px;overflow:hidden"><span style="font-size:12px">泰国</span></div>
<div class="t cell" style="left:1135px;top:1067.0px;color:#c84040;font-size:12.75px;">07-08 22:41:14</div>
<div class="sep" style="left:1135px;top:1085.5px;width:80px"></div>
<div class="bdg" style="left:1135px;top:1088.5px;width:33px;height:21px;line-height:21px;padding-top:1.5px;font-size:12px;background:#f00000">离线</div>
<div class="bdg" style="left:1246px;top:1065.5px;width:34px;height:22px;line-height:22px;padding-top:1.5px;font-size:12px;background:#f00000">禁用</div>
<div class="bdg" style="left:1290px;top:1065.5px;width:70px;height:22px;line-height:22px;padding-top:1.5px;font-size:12px;background:#009688">银行卡信息</div>
<div class="bdg" style="left:1370px;top:1065.5px;width:58px;height:22px;line-height:22px;padding-top:1.5px;font-size:12px;background:#FF5722">地址信息</div>
<div class="bdg" style="left:1438px;top:1065.5px;width:38px;height:22px;line-height:22px;padding-top:1.5px;font-size:12px;background:#009688">编 辑</div>
<div class="bdg" style="left:1486px;top:1065.5px;width:46px;height:22px;line-height:22px;padding-top:1.5px;font-size:12px;background:#009688">加扣款</div>
<div class="bdg" style="left:1542px;top:1065.5px;width:58px;height:22px;line-height:22px;padding-top:1.5px;font-size:12px;background:#009688">赠送彩金</div>
<div class="bdg" style="left:1610px;top:1065.5px;width:70px;height:22px;line-height:22px;padding-top:1.5px;font-size:12px;background:#f00000">刷新二维码</div>
<div class="bdg" style="left:1690px;top:1065.5px;width:58px;height:22px;line-height:22px;padding-top:1.5px;font-size:12px;background:#FF5722">发送短信</div>
<div class="bdg" style="left:1758px;top:1065.5px;width:37px;height:22px;line-height:22px;padding-top:1.5px;font-size:12px;background:#f00000">删 除</div>
<div class="bdg" style="left:1805px;top:1065.5px;width:58px;height:22px;line-height:22px;padding-top:1.5px;font-size:12px;background:#0d7d0d">设为假人</div>
<div class="bdg" style="left:1246px;top:1088.75px;width:58px;height:22px;line-height:22px;padding-top:1.5px;font-size:12px;background:#FF5722">暗扣设置</div>
<div class="bdg" style="left:1314px;top:1088.75px;width:58px;height:22px;line-height:22px;padding-top:1.5px;font-size:12px;background:#FF5722">查看团队</div>
<div class="bdg" style="left:1382px;top:1088.75px;width:38px;height:22px;line-height:22px;padding-top:1.5px;font-size:12px;background:#1E9FFF">账 变</div>
<div class="t cell" style="left:251px;top:1149.0px;color:#666;font-size:12.75px;">13883</div>
<div class="t cell" style="left:297px;top:1137.5px;color:#666;font-size:12.75px;">aa19</div>
<div class="sep" style="left:297px;top:1156.0px;width:65px"></div>
<div class="t cell" style="left:297px;top:1160.7px;color:#666;font-size:12.75px;">VIP 1</div>
<div class="t cell" style="left:393px;top:1135.5px;color:#666;font-size:12.75px;">0821456577</div>
<div class="sep" style="left:393px;top:1154.0px;width:64px"></div>
<div class="bdg" style="left:393px;top:1157.0px;width:34px;height:21px;line-height:21px;padding-top:1.5px;font-size:12px;background:#1E9FFF">真人</div>
<div class="t cell" style="left:489px;top:1137.5px;color:#666;font-size:12.75px;">0.00</div>
<div class="sep" style="left:489px;top:1156.0px;width:55px"></div>
<div class="t cell" style="left:489px;top:1160.7px;color:#666;font-size:12.75px;">0.0000</div>
<div class="t cell" style="left:696px;top:1149.0px;color:#666;font-size:12.75px;">0</div>
<div class="bdg" style="left:575px;top:1133.25px;width:82px;height:21.5px;line-height:21.5px;padding-top:1.5px;font-size:12px;background:#1E9FFF">个人配置模式</div>
<div class="sep" style="left:575px;top:1156.0px;width:89px"></div>
<div class="bdg" style="left:575px;top:1159.25px;width:67px;height:21.5px;line-height:21.5px;padding-top:2px;font-size:13px;background:#FF5722">0% - &gt;0%</div>
<div class="t cell" style="left:772px;top:1137.5px;color:#666;font-size:12.75px;">VJQ4MG</div>
<div class="sep" style="left:772px;top:1156.0px;width:70px"></div>
<div class="t cell" style="left:772px;top:1160.7px;color:#666;font-size:12.75px;">tt</div>
<div class="t cell" style="left:873px;top:1149.0px;color:#666;font-size:12.75px;">2024-07-08 22:12:57</div>
<div class="t cell" style="left:1024px;top:1137.5px;color:#666;font-size:12.75px;"></div>
<div class="sep" style="left:1024px;top:1156.0px;width:80px"></div>
<div class="t cell" style="left:1024px;top:1160.7px;color:#666;font-size:12.75px;width:95px;overflow:hidden"></div>
<div class="t cell" style="left:1135px;top:1149.0px;color:#666;font-size:12.75px;"><span style="font-size:12px">从未登陆</span></div>
<div class="bdg" style="left:1246px;top:1134.0px;width:34px;height:22px;line-height:22px;padding-top:1.5px;font-size:12px;background:#f00000">禁用</div>
<div class="bdg" style="left:1290px;top:1134.0px;width:70px;height:22px;line-height:22px;padding-top:1.5px;font-size:12px;background:#009688">银行卡信息</div>
<div class="bdg" style="left:1370px;top:1134.0px;width:58px;height:22px;line-height:22px;padding-top:1.5px;font-size:12px;background:#FF5722">地址信息</div>
<div class="bdg" style="left:1438px;top:1134.0px;width:38px;height:22px;line-height:22px;padding-top:1.5px;font-size:12px;background:#009688">编 辑</div>
<div class="bdg" style="left:1486px;top:1134.0px;width:46px;height:22px;line-height:22px;padding-top:1.5px;font-size:12px;background:#009688">加扣款</div>
<div class="bdg" style="left:1542px;top:1134.0px;width:58px;height:22px;line-height:22px;padding-top:1.5px;font-size:12px;background:#009688">赠送彩金</div>
<div class="bdg" style="left:1610px;top:1134.0px;width:70px;height:22px;line-height:22px;padding-top:1.5px;font-size:12px;background:#f00000">刷新二维码</div>
<div class="bdg" style="left:1690px;top:1134.0px;width:58px;height:22px;line-height:22px;padding-top:1.5px;font-size:12px;background:#FF5722">发送短信</div>
<div class="bdg" style="left:1758px;top:1134.0px;width:37px;height:22px;line-height:22px;padding-top:1.5px;font-size:12px;background:#f00000">删 除</div>
<div class="bdg" style="left:1805px;top:1134.0px;width:58px;height:22px;line-height:22px;padding-top:1.5px;font-size:12px;background:#0d7d0d">设为假人</div>
<div class="bdg" style="left:1246px;top:1157.25px;width:58px;height:22px;line-height:22px;padding-top:1.5px;font-size:12px;background:#FF5722">暗扣设置</div>
<div class="bdg" style="left:1314px;top:1157.25px;width:58px;height:22px;line-height:22px;padding-top:1.5px;font-size:12px;background:#FF5722">查看团队</div>
<div class="bdg" style="left:1382px;top:1157.25px;width:38px;height:22px;line-height:22px;padding-top:1.5px;font-size:12px;background:#1E9FFF">账 变</div>
<div class="t cell" style="left:251px;top:1217.5px;color:#666;font-size:12.75px;">13882</div>
<div class="t cell" style="left:297px;top:1206.0px;color:#666;font-size:12.75px;">sd10012✨?</div>
<div class="sep" style="left:297px;top:1224.5px;width:65px"></div>
<div class="t cell" style="left:297px;top:1229.2px;color:#666;font-size:12.75px;">VIP 1</div>
<div class="t cell" style="left:393px;top:1204.0px;color:#666;font-size:12.75px;">0888888888</div>
<div class="sep" style="left:393px;top:1222.5px;width:64px"></div>
<div class="bdg" style="left:393px;top:1225.5px;width:34px;height:21px;line-height:21px;padding-top:1.5px;font-size:12px;background:#1E9FFF">真人</div>
<div class="t cell" style="left:489px;top:1206.0px;color:#666;font-size:12.75px;">0.00</div>
<div class="sep" style="left:489px;top:1224.5px;width:55px"></div>
<div class="t cell" style="left:489px;top:1229.2px;color:#666;font-size:12.75px;">0.0000</div>
<div class="t cell" style="left:696px;top:1217.5px;color:#666;font-size:12.75px;">0</div>
<div class="bdg" style="left:575px;top:1201.75px;width:82px;height:21.5px;line-height:21.5px;padding-top:1.5px;font-size:12px;background:#1E9FFF">个人配置模式</div>
<div class="sep" style="left:575px;top:1224.5px;width:89px"></div>
<div class="bdg" style="left:575px;top:1227.75px;width:67px;height:21.5px;line-height:21.5px;padding-top:2px;font-size:13px;background:#FF5722">0% - &gt;0%</div>
<div class="t cell" style="left:772px;top:1206.0px;color:#666;font-size:12.75px;">KBNM5H</div>
<div class="sep" style="left:772px;top:1224.5px;width:70px"></div>
<div class="t cell" style="left:772px;top:1229.2px;color:#666;font-size:12.75px;">tt</div>
<div class="t cell" style="left:873px;top:1217.5px;color:#666;font-size:12.75px;">2024-07-08 22:12:40</div>
<div class="t cell" style="left:1024px;top:1206.0px;color:#666;font-size:12.75px;">147.50.120.93</div>
<div class="sep" style="left:1024px;top:1224.5px;width:80px"></div>
<div class="t cell" style="left:1024px;top:1229.2px;color:#666;font-size:12.75px;width:95px;overflow:hidden"><span style="font-size:12px">泰国</span></div>
<div class="t cell" style="left:1135px;top:1204.0px;color:#c84040;font-size:12.75px;">07-09 04:36:56</div>
<div class="sep" style="left:1135px;top:1222.5px;width:80px"></div>
<div class="bdg" style="left:1135px;top:1225.5px;width:33px;height:21px;line-height:21px;padding-top:1.5px;font-size:12px;background:#f00000">离线</div>
<div class="bdg" style="left:1246px;top:1202.5px;width:34px;height:22px;line-height:22px;padding-top:1.5px;font-size:12px;background:#f00000">禁用</div>
<div class="bdg" style="left:1290px;top:1202.5px;width:70px;height:22px;line-height:22px;padding-top:1.5px;font-size:12px;background:#009688">银行卡信息</div>
<div class="bdg" style="left:1370px;top:1202.5px;width:58px;height:22px;line-height:22px;padding-top:1.5px;font-size:12px;background:#FF5722">地址信息</div>
<div class="bdg" style="left:1438px;top:1202.5px;width:38px;height:22px;line-height:22px;padding-top:1.5px;font-size:12px;background:#009688">编 辑</div>
<div class="bdg" style="left:1486px;top:1202.5px;width:46px;height:22px;line-height:22px;padding-top:1.5px;font-size:12px;background:#009688">加扣款</div>
<div class="bdg" style="left:1542px;top:1202.5px;width:58px;height:22px;line-height:22px;padding-top:1.5px;font-size:12px;background:#009688">赠送彩金</div>
<div class="bdg" style="left:1610px;top:1202.5px;width:70px;height:22px;line-height:22px;padding-top:1.5px;font-size:12px;background:#f00000">刷新二维码</div>
<div class="bdg" style="left:1690px;top:1202.5px;width:58px;height:22px;line-height:22px;padding-top:1.5px;font-size:12px;background:#FF5722">发送短信</div>
<div class="bdg" style="left:1758px;top:1202.5px;width:37px;height:22px;line-height:22px;padding-top:1.5px;font-size:12px;background:#f00000">删 除</div>
<div class="bdg" style="left:1805px;top:1202.5px;width:58px;height:22px;line-height:22px;padding-top:1.5px;font-size:12px;background:#0d7d0d">设为假人</div>
<div class="bdg" style="left:1246px;top:1225.75px;width:58px;height:22px;line-height:22px;padding-top:1.5px;font-size:12px;background:#FF5722">暗扣设置</div>
<div class="bdg" style="left:1314px;top:1225.75px;width:58px;height:22px;line-height:22px;padding-top:1.5px;font-size:12px;background:#FF5722">查看团队</div>
<div class="bdg" style="left:1382px;top:1225.75px;width:38px;height:22px;line-height:22px;padding-top:1.5px;font-size:12px;background:#1E9FFF">账 变</div>
<div class="bdg" style="left:575px;top:1270.25px;width:82px;height:21.5px;line-height:21.5px;padding-top:1.5px;font-size:12px;background:#1E9FFF">个人配置模式</div>
<svg class="a" style="left:1690px;top:806px" width="320" height="320" viewBox="0 0 320 320"><circle cx="157.25" cy="157" r="140" fill="none" stroke="#ea0a0a" stroke-width="4.6"/><text transform="translate(53.99,185.05) rotate(-105.20) scale(0.82,1)" text-anchor="middle" font-family="Liberation Sans" font-weight="bold" font-size="26" fill="#ea0a0a" stroke="#ea0a0a" stroke-width="1.3">w</text><text transform="translate(50.34,161.29) rotate(-92.30) scale(0.82,1)" text-anchor="middle" font-family="Liberation Sans" font-weight="bold" font-size="26" fill="#ea0a0a" stroke="#ea0a0a" stroke-width="1.3">w</text><text transform="translate(52.29,136.22) rotate(-78.80) scale(0.82,1)" text-anchor="middle" font-family="Liberation Sans" font-weight="bold" font-size="26" fill="#ea0a0a" stroke="#ea0a0a" stroke-width="1.3">w</text><text transform="translate(58.61,115.54) rotate(-67.20) scale(0.82,1)" text-anchor="middle" font-family="Liberation Sans" font-weight="bold" font-size="26" fill="#ea0a0a" stroke="#ea0a0a" stroke-width="1.3">.</text><text transform="translate(71.35,93.20) rotate(-53.40) scale(0.82,1)" text-anchor="middle" font-family="Liberation Sans" font-weight="bold" font-size="26" fill="#ea0a0a" stroke="#ea0a0a" stroke-width="1.3">h</text><text transform="translate(89.48,74.20) rotate(-39.30) scale(0.82,1)" text-anchor="middle" font-family="Liberation Sans" font-weight="bold" font-size="26" fill="#ea0a0a" stroke="#ea0a0a" stroke-width="1.3">a</text><text transform="translate(111.69,60.18) rotate(-25.20) scale(0.82,1)" text-anchor="middle" font-family="Liberation Sans" font-weight="bold" font-size="26" fill="#ea0a0a" stroke="#ea0a0a" stroke-width="1.3">i</text><text transform="translate(133.73,52.62) rotate(-12.70) scale(0.82,1)" text-anchor="middle" font-family="Liberation Sans" font-weight="bold" font-size="26" fill="#ea0a0a" stroke="#ea0a0a" stroke-width="1.3">w</text><text transform="translate(158.74,50.01) rotate(0.80) scale(0.82,1)" text-anchor="middle" font-family="Liberation Sans" font-weight="bold" font-size="26" fill="#ea0a0a" stroke="#ea0a0a" stroke-width="1.3">a</text><text transform="translate(183.32,53.22) rotate(14.10) scale(0.82,1)" text-anchor="middle" font-family="Liberation Sans" font-weight="bold" font-size="26" fill="#ea0a0a" stroke="#ea0a0a" stroke-width="1.3">i</text><text transform="translate(206.66,62.09) rotate(27.50) scale(0.82,1)" text-anchor="middle" font-family="Liberation Sans" font-weight="bold" font-size="26" fill="#ea0a0a" stroke="#ea0a0a" stroke-width="1.3">y</text><text transform="translate(227.17,76.00) rotate(40.80) scale(0.82,1)" text-anchor="middle" font-family="Liberation Sans" font-weight="bold" font-size="26" fill="#ea0a0a" stroke="#ea0a0a" stroke-width="1.3">m</text><text transform="translate(243.26,93.35) rotate(53.50) scale(0.82,1)" text-anchor="middle" font-family="Liberation Sans" font-weight="bold" font-size="26" fill="#ea0a0a" stroke="#ea0a0a" stroke-width="1.3">.</text><text transform="translate(256.74,117.61) rotate(68.40) scale(0.82,1)" text-anchor="middle" font-family="Liberation Sans" font-weight="bold" font-size="26" fill="#ea0a0a" stroke="#ea0a0a" stroke-width="1.3">c</text><text transform="translate(263.26,142.48) rotate(82.20) scale(0.82,1)" text-anchor="middle" font-family="Liberation Sans" font-weight="bold" font-size="26" fill="#ea0a0a" stroke="#ea0a0a" stroke-width="1.3">o</text><text transform="translate(263.78,167.07) rotate(95.40) scale(0.82,1)" text-anchor="middle" font-family="Liberation Sans" font-weight="bold" font-size="26" fill="#ea0a0a" stroke="#ea0a0a" stroke-width="1.3">m</text><text transform="translate(77.63,260.39) rotate(37.60)" text-anchor="middle" font-family="Liberation Sans" font-size="11.5" fill="#ea0a0a">h</text><text transform="translate(90.04,268.86) rotate(31.00)" text-anchor="middle" font-family="Liberation Sans" font-size="11.5" fill="#ea0a0a">a</text><text transform="translate(103.34,275.84) rotate(24.40)" text-anchor="middle" font-family="Liberation Sans" font-size="11.5" fill="#ea0a0a">i</text><text transform="translate(117.36,281.25) rotate(17.80)" text-anchor="middle" font-family="Liberation Sans" font-size="11.5" fill="#ea0a0a">w</text><text transform="translate(131.90,285.01) rotate(11.20)" text-anchor="middle" font-family="Liberation Sans" font-size="11.5" fill="#ea0a0a">a</text><text transform="translate(146.78,287.08) rotate(4.60)" text-anchor="middle" font-family="Liberation Sans" font-size="11.5" fill="#ea0a0a">i</text><text transform="translate(161.80,287.42) rotate(-2.00)" text-anchor="middle" font-family="Liberation Sans" font-size="11.5" fill="#ea0a0a">y</text><text transform="translate(176.76,286.03) rotate(-8.60)" text-anchor="middle" font-family="Liberation Sans" font-size="11.5" fill="#ea0a0a">m</text><text transform="translate(191.47,282.93) rotate(-15.20)" text-anchor="middle" font-family="Liberation Sans" font-size="11.5" fill="#ea0a0a">.</text><text transform="translate(205.71,278.17) rotate(-21.80)" text-anchor="middle" font-family="Liberation Sans" font-size="11.5" fill="#ea0a0a">c</text><text transform="translate(219.32,271.79) rotate(-28.40)" text-anchor="middle" font-family="Liberation Sans" font-size="11.5" fill="#ea0a0a">o</text><text transform="translate(232.10,263.90) rotate(-35.00)" text-anchor="middle" font-family="Liberation Sans" font-size="11.5" fill="#ea0a0a">m</text><text transform="translate(62.80,237) scale(0.82,1)" text-anchor="middle" font-family="Liberation Sans" font-weight="bold" font-size="26" fill="#ea0a0a" stroke="#ea0a0a" stroke-width="1.3">h</text><text transform="translate(80.80,237) scale(0.82,1)" text-anchor="middle" font-family="Liberation Sans" font-weight="bold" font-size="26" fill="#ea0a0a" stroke="#ea0a0a" stroke-width="1.3">a</text><text transform="translate(98.90,237) scale(0.82,1)" text-anchor="middle" font-family="Liberation Sans" font-weight="bold" font-size="26" fill="#ea0a0a" stroke="#ea0a0a" stroke-width="1.3">i</text><text transform="translate(116.30,237) scale(0.82,1)" text-anchor="middle" font-family="Liberation Sans" font-weight="bold" font-size="26" fill="#ea0a0a" stroke="#ea0a0a" stroke-width="1.3">w</text><text transform="translate(131.60,237) scale(0.82,1)" text-anchor="middle" font-family="Liberation Sans" font-weight="bold" font-size="26" fill="#ea0a0a" stroke="#ea0a0a" stroke-width="1.3">a</text><text transform="translate(149.70,237) scale(0.82,1)" text-anchor="middle" font-family="Liberation Sans" font-weight="bold" font-size="26" fill="#ea0a0a" stroke="#ea0a0a" stroke-width="1.3">i</text><text transform="translate(165.10,237) scale(0.82,1)" text-anchor="middle" font-family="Liberation Sans" font-weight="bold" font-size="26" fill="#ea0a0a" stroke="#ea0a0a" stroke-width="1.3">y</text><text transform="translate(183.80,237) scale(0.82,1)" text-anchor="middle" font-family="Liberation Sans" font-weight="bold" font-size="26" fill="#ea0a0a" stroke="#ea0a0a" stroke-width="1.3">m</text><text transform="translate(197.20,237) scale(0.82,1)" text-anchor="middle" font-family="Liberation Sans" font-weight="bold" font-size="26" fill="#ea0a0a" stroke="#ea0a0a" stroke-width="1.3">.</text><text transform="translate(215.90,237) scale(0.82,1)" text-anchor="middle" font-family="Liberation Sans" font-weight="bold" font-size="26" fill="#ea0a0a" stroke="#ea0a0a" stroke-width="1.3">c</text><text transform="translate(234.00,237) scale(0.82,1)" text-anchor="middle" font-family="Liberation Sans" font-weight="bold" font-size="26" fill="#ea0a0a" stroke="#ea0a0a" stroke-width="1.3">o</text><text transform="translate(251.40,237) scale(0.82,1)" text-anchor="middle" font-family="Liberation Sans" font-weight="bold" font-size="26" fill="#ea0a0a" stroke="#ea0a0a" stroke-width="1.3">m</text><text transform="translate(161,171) skewX(-7)" text-anchor="middle" font-family="Liberation Serif, serif" font-size="36" letter-spacing="5" fill="#ea0a0a" stroke="#ea0a0a" stroke-width="0.7">海外源码</text></svg>
</body></html>
